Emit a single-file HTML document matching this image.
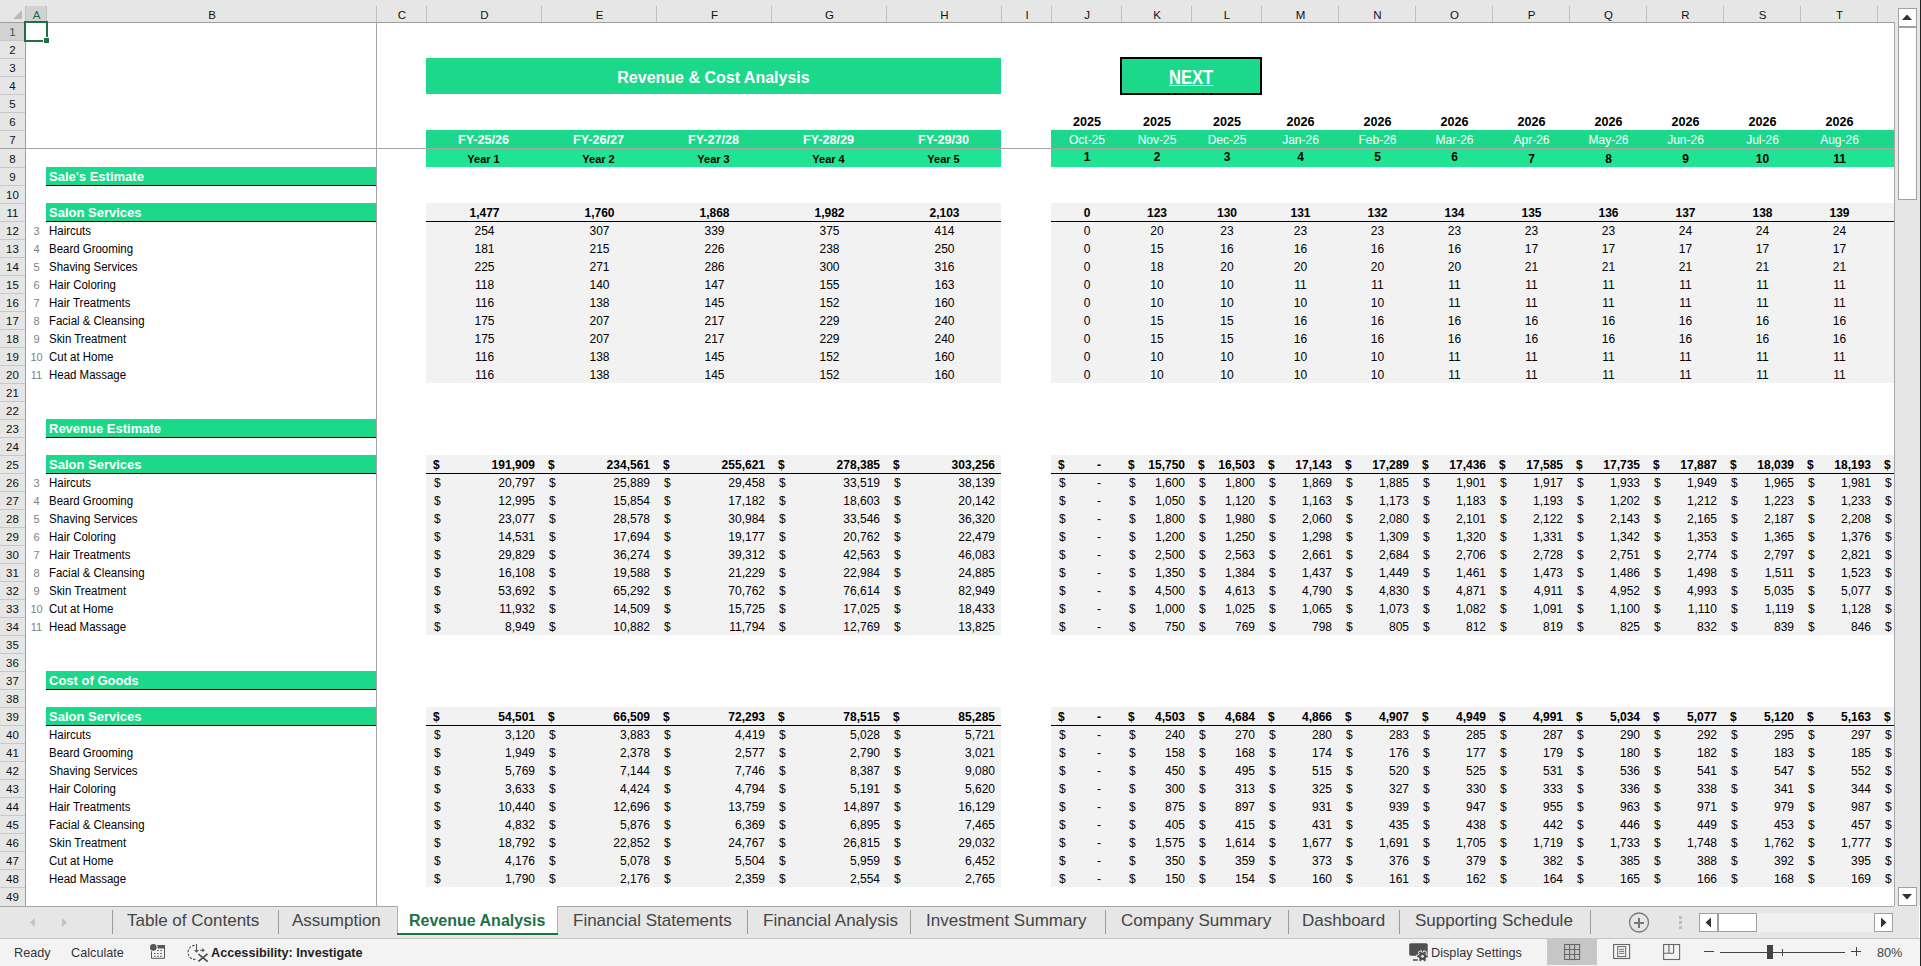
<!DOCTYPE html>
<html><head><meta charset="utf-8"><style>
html,body{margin:0;padding:0}
body{width:1921px;height:966px;overflow:hidden;background:#fff;position:relative;font-family:"Liberation Sans",sans-serif;}
.a{position:absolute}
.t{position:absolute;height:18px;line-height:18px;font-size:12px;white-space:nowrap;color:#000}
.b{font-weight:bold}
.w{color:#fff}
.g{color:#7f7f7f;font-size:11px}
.l{font-size:12px;transform:scaleX(.955);transform-origin:0 0}
.n{font-size:12px}
.hd{font-size:11.5px;line-height:18px}
.tab{font-size:17px;line-height:22px;height:22px;color:#444}
.st{font-size:12.7px;line-height:16px;height:16px;color:#333}
</style></head><body>
<div class="a" style="left:426px;top:58px;width:575px;height:36px;background:#1cd88b;"></div>
<div class="t" style="left:426px;top:68px;width:575px;text-align:center;font-size:16px;font-weight:bold;color:#fff;line-height:20px;height:20px">Revenue &amp; Cost Analysis</div>
<div class="a" style="left:1120px;top:57px;width:138px;height:34px;background:#1cd88b;border:2px solid #000"></div>
<div class="t" style="left:1120px;top:65.5px;width:142px;text-align:center;font-size:19.6px;font-weight:bold;color:#fff;line-height:22px;height:22px"><span style="display:inline-block;transform:scaleX(0.845);text-decoration:underline">NEXT</span></div>
<div class="t b" style="left:1052px;top:113px;width:70px;text-align:center;font-size:12.6px">2025</div>
<div class="t b" style="left:1122px;top:113px;width:70px;text-align:center;font-size:12.6px">2025</div>
<div class="t b" style="left:1192px;top:113px;width:70px;text-align:center;font-size:12.6px">2025</div>
<div class="t b" style="left:1262px;top:113px;width:77px;text-align:center;font-size:12.6px">2026</div>
<div class="t b" style="left:1339px;top:113px;width:77px;text-align:center;font-size:12.6px">2026</div>
<div class="t b" style="left:1416px;top:113px;width:77px;text-align:center;font-size:12.6px">2026</div>
<div class="t b" style="left:1493px;top:113px;width:77px;text-align:center;font-size:12.6px">2026</div>
<div class="t b" style="left:1570px;top:113px;width:77px;text-align:center;font-size:12.6px">2026</div>
<div class="t b" style="left:1647px;top:113px;width:77px;text-align:center;font-size:12.6px">2026</div>
<div class="t b" style="left:1724px;top:113px;width:77px;text-align:center;font-size:12.6px">2026</div>
<div class="t b" style="left:1801px;top:113px;width:77px;text-align:center;font-size:12.6px">2026</div>
<div class="a" style="left:426px;top:130px;width:575px;height:18px;background:#1cd88b;"></div>
<div class="a" style="left:1051px;top:130px;width:843px;height:18px;background:#1cd88b;"></div>
<div class="a" style="left:426px;top:149px;width:575px;height:18px;background:#20e493;"></div>
<div class="a" style="left:1051px;top:149px;width:843px;height:18px;background:#20e493;"></div>
<div class="t b w" style="left:426px;top:131px;width:115px;text-align:center;font-size:12.6px">FY-25/26</div>
<div class="t b" style="left:426px;top:150px;width:115px;text-align:center;font-size:11px">Year 1</div>
<div class="t b w" style="left:541px;top:131px;width:115px;text-align:center;font-size:12.6px">FY-26/27</div>
<div class="t b" style="left:541px;top:150px;width:115px;text-align:center;font-size:11px">Year 2</div>
<div class="t b w" style="left:656px;top:131px;width:115px;text-align:center;font-size:12.6px">FY-27/28</div>
<div class="t b" style="left:656px;top:150px;width:115px;text-align:center;font-size:11px">Year 3</div>
<div class="t b w" style="left:771px;top:131px;width:115px;text-align:center;font-size:12.6px">FY-28/29</div>
<div class="t b" style="left:771px;top:150px;width:115px;text-align:center;font-size:11px">Year 4</div>
<div class="t b w" style="left:886px;top:131px;width:115px;text-align:center;font-size:12.6px">FY-29/30</div>
<div class="t b" style="left:886px;top:150px;width:115px;text-align:center;font-size:11px">Year 5</div>
<div class="t w" style="left:1052px;top:131px;width:70px;text-align:center;">Oct-25</div>
<div class="t b" style="left:1052px;top:148px;width:70px;text-align:center;">1</div>
<div class="t w" style="left:1122px;top:131px;width:70px;text-align:center;">Nov-25</div>
<div class="t b" style="left:1122px;top:148px;width:70px;text-align:center;">2</div>
<div class="t w" style="left:1192px;top:131px;width:70px;text-align:center;">Dec-25</div>
<div class="t b" style="left:1192px;top:148px;width:70px;text-align:center;">3</div>
<div class="t w" style="left:1262px;top:131px;width:77px;text-align:center;">Jan-26</div>
<div class="t b" style="left:1262px;top:148px;width:77px;text-align:center;">4</div>
<div class="t w" style="left:1339px;top:131px;width:77px;text-align:center;">Feb-26</div>
<div class="t b" style="left:1339px;top:148px;width:77px;text-align:center;">5</div>
<div class="t w" style="left:1416px;top:131px;width:77px;text-align:center;">Mar-26</div>
<div class="t b" style="left:1416px;top:148px;width:77px;text-align:center;">6</div>
<div class="t w" style="left:1493px;top:131px;width:77px;text-align:center;">Apr-26</div>
<div class="t b" style="left:1493px;top:150px;width:77px;text-align:center;">7</div>
<div class="t w" style="left:1570px;top:131px;width:77px;text-align:center;">May-26</div>
<div class="t b" style="left:1570px;top:150px;width:77px;text-align:center;">8</div>
<div class="t w" style="left:1647px;top:131px;width:77px;text-align:center;">Jun-26</div>
<div class="t b" style="left:1647px;top:150px;width:77px;text-align:center;">9</div>
<div class="t w" style="left:1724px;top:131px;width:77px;text-align:center;">Jul-26</div>
<div class="t b" style="left:1724px;top:150px;width:77px;text-align:center;">10</div>
<div class="t w" style="left:1801px;top:131px;width:77px;text-align:center;">Aug-26</div>
<div class="t b" style="left:1801px;top:150px;width:77px;text-align:center;">11</div>
<div class="a" style="left:46px;top:167px;width:330px;height:18px;background:#1cd88b;border-bottom:1px solid #000"></div>
<div class="t b w" style="left:49px;top:168px;width:300px;font-size:13px">Sale's Estimate</div>
<div class="a" style="left:46px;top:419px;width:330px;height:18px;background:#1cd88b;border-bottom:1px solid #000"></div>
<div class="t b w" style="left:49px;top:420px;width:300px;font-size:13px">Revenue Estimate</div>
<div class="a" style="left:46px;top:671px;width:330px;height:18px;background:#1cd88b;border-bottom:1px solid #000"></div>
<div class="t b w" style="left:49px;top:672px;width:300px;font-size:13px">Cost of Goods</div>
<div class="a" style="left:46px;top:203px;width:330px;height:18px;background:#1cd88b;border-bottom:1px solid #000"></div>
<div class="t b w" style="left:49px;top:204px;width:300px;font-size:13px">Salon Services</div>
<div class="a" style="left:46px;top:455px;width:330px;height:18px;background:#1cd88b;border-bottom:1px solid #000"></div>
<div class="t b w" style="left:49px;top:456px;width:300px;font-size:13px">Salon Services</div>
<div class="a" style="left:46px;top:707px;width:330px;height:18px;background:#1cd88b;border-bottom:1px solid #000"></div>
<div class="t b w" style="left:49px;top:708px;width:300px;font-size:13px">Salon Services</div>
<div class="a" style="left:426px;top:203px;width:575px;height:180px;background:#f2f2f2;"></div>
<div class="a" style="left:1051px;top:203px;width:843px;height:180px;background:#f2f2f2;"></div>
<div class="a" style="left:426px;top:221px;width:575px;height:1px;background:#000;"></div>
<div class="a" style="left:1051px;top:221px;width:843px;height:1px;background:#000;"></div>
<div class="a" style="left:426px;top:455px;width:575px;height:180px;background:#f2f2f2;"></div>
<div class="a" style="left:1051px;top:455px;width:843px;height:180px;background:#f2f2f2;"></div>
<div class="a" style="left:426px;top:473px;width:575px;height:1px;background:#000;"></div>
<div class="a" style="left:1051px;top:473px;width:843px;height:1px;background:#000;"></div>
<div class="a" style="left:426px;top:707px;width:575px;height:180px;background:#f2f2f2;"></div>
<div class="a" style="left:1051px;top:707px;width:843px;height:180px;background:#f2f2f2;"></div>
<div class="a" style="left:426px;top:725px;width:575px;height:1px;background:#000;"></div>
<div class="a" style="left:1051px;top:725px;width:843px;height:1px;background:#000;"></div>
<div class="t g" style="left:26px;top:222px;width:21px;text-align:center;">3</div>
<div class="t l" style="left:49px;top:222px">Haircuts</div>
<div class="t g" style="left:26px;top:474px;width:21px;text-align:center;">3</div>
<div class="t l" style="left:49px;top:474px">Haircuts</div>
<div class="t l" style="left:49px;top:726px">Haircuts</div>
<div class="t g" style="left:26px;top:240px;width:21px;text-align:center;">4</div>
<div class="t l" style="left:49px;top:240px">Beard Grooming</div>
<div class="t g" style="left:26px;top:492px;width:21px;text-align:center;">4</div>
<div class="t l" style="left:49px;top:492px">Beard Grooming</div>
<div class="t l" style="left:49px;top:744px">Beard Grooming</div>
<div class="t g" style="left:26px;top:258px;width:21px;text-align:center;">5</div>
<div class="t l" style="left:49px;top:258px">Shaving Services</div>
<div class="t g" style="left:26px;top:510px;width:21px;text-align:center;">5</div>
<div class="t l" style="left:49px;top:510px">Shaving Services</div>
<div class="t l" style="left:49px;top:762px">Shaving Services</div>
<div class="t g" style="left:26px;top:276px;width:21px;text-align:center;">6</div>
<div class="t l" style="left:49px;top:276px">Hair Coloring</div>
<div class="t g" style="left:26px;top:528px;width:21px;text-align:center;">6</div>
<div class="t l" style="left:49px;top:528px">Hair Coloring</div>
<div class="t l" style="left:49px;top:780px">Hair Coloring</div>
<div class="t g" style="left:26px;top:294px;width:21px;text-align:center;">7</div>
<div class="t l" style="left:49px;top:294px">Hair Treatments</div>
<div class="t g" style="left:26px;top:546px;width:21px;text-align:center;">7</div>
<div class="t l" style="left:49px;top:546px">Hair Treatments</div>
<div class="t l" style="left:49px;top:798px">Hair Treatments</div>
<div class="t g" style="left:26px;top:312px;width:21px;text-align:center;">8</div>
<div class="t l" style="left:49px;top:312px">Facial &amp; Cleansing</div>
<div class="t g" style="left:26px;top:564px;width:21px;text-align:center;">8</div>
<div class="t l" style="left:49px;top:564px">Facial &amp; Cleansing</div>
<div class="t l" style="left:49px;top:816px">Facial &amp; Cleansing</div>
<div class="t g" style="left:26px;top:330px;width:21px;text-align:center;">9</div>
<div class="t l" style="left:49px;top:330px">Skin Treatment</div>
<div class="t g" style="left:26px;top:582px;width:21px;text-align:center;">9</div>
<div class="t l" style="left:49px;top:582px">Skin Treatment</div>
<div class="t l" style="left:49px;top:834px">Skin Treatment</div>
<div class="t g" style="left:26px;top:348px;width:21px;text-align:center;">10</div>
<div class="t l" style="left:49px;top:348px">Cut at Home</div>
<div class="t g" style="left:26px;top:600px;width:21px;text-align:center;">10</div>
<div class="t l" style="left:49px;top:600px">Cut at Home</div>
<div class="t l" style="left:49px;top:852px">Cut at Home</div>
<div class="t g" style="left:26px;top:366px;width:21px;text-align:center;">11</div>
<div class="t l" style="left:49px;top:366px">Head Massage</div>
<div class="t g" style="left:26px;top:618px;width:21px;text-align:center;">11</div>
<div class="t l" style="left:49px;top:618px">Head Massage</div>
<div class="t l" style="left:49px;top:870px">Head Massage</div>
<div class="t n b" style="left:427px;top:204px;width:115px;text-align:center;">1,477</div>
<div class="t n b" style="left:542px;top:204px;width:115px;text-align:center;">1,760</div>
<div class="t n b" style="left:657px;top:204px;width:115px;text-align:center;">1,868</div>
<div class="t n b" style="left:772px;top:204px;width:115px;text-align:center;">1,982</div>
<div class="t n b" style="left:887px;top:204px;width:115px;text-align:center;">2,103</div>
<div class="t n b" style="left:1052px;top:204px;width:70px;text-align:center;">0</div>
<div class="t n b" style="left:1122px;top:204px;width:70px;text-align:center;">123</div>
<div class="t n b" style="left:1192px;top:204px;width:70px;text-align:center;">130</div>
<div class="t n b" style="left:1262px;top:204px;width:77px;text-align:center;">131</div>
<div class="t n b" style="left:1339px;top:204px;width:77px;text-align:center;">132</div>
<div class="t n b" style="left:1416px;top:204px;width:77px;text-align:center;">134</div>
<div class="t n b" style="left:1493px;top:204px;width:77px;text-align:center;">135</div>
<div class="t n b" style="left:1570px;top:204px;width:77px;text-align:center;">136</div>
<div class="t n b" style="left:1647px;top:204px;width:77px;text-align:center;">137</div>
<div class="t n b" style="left:1724px;top:204px;width:77px;text-align:center;">138</div>
<div class="t n b" style="left:1801px;top:204px;width:77px;text-align:center;">139</div>
<div class="t n" style="left:427px;top:222px;width:115px;text-align:center;">254</div>
<div class="t n" style="left:542px;top:222px;width:115px;text-align:center;">307</div>
<div class="t n" style="left:657px;top:222px;width:115px;text-align:center;">339</div>
<div class="t n" style="left:772px;top:222px;width:115px;text-align:center;">375</div>
<div class="t n" style="left:887px;top:222px;width:115px;text-align:center;">414</div>
<div class="t n" style="left:1052px;top:222px;width:70px;text-align:center;">0</div>
<div class="t n" style="left:1122px;top:222px;width:70px;text-align:center;">20</div>
<div class="t n" style="left:1192px;top:222px;width:70px;text-align:center;">23</div>
<div class="t n" style="left:1262px;top:222px;width:77px;text-align:center;">23</div>
<div class="t n" style="left:1339px;top:222px;width:77px;text-align:center;">23</div>
<div class="t n" style="left:1416px;top:222px;width:77px;text-align:center;">23</div>
<div class="t n" style="left:1493px;top:222px;width:77px;text-align:center;">23</div>
<div class="t n" style="left:1570px;top:222px;width:77px;text-align:center;">23</div>
<div class="t n" style="left:1647px;top:222px;width:77px;text-align:center;">24</div>
<div class="t n" style="left:1724px;top:222px;width:77px;text-align:center;">24</div>
<div class="t n" style="left:1801px;top:222px;width:77px;text-align:center;">24</div>
<div class="t n" style="left:427px;top:240px;width:115px;text-align:center;">181</div>
<div class="t n" style="left:542px;top:240px;width:115px;text-align:center;">215</div>
<div class="t n" style="left:657px;top:240px;width:115px;text-align:center;">226</div>
<div class="t n" style="left:772px;top:240px;width:115px;text-align:center;">238</div>
<div class="t n" style="left:887px;top:240px;width:115px;text-align:center;">250</div>
<div class="t n" style="left:1052px;top:240px;width:70px;text-align:center;">0</div>
<div class="t n" style="left:1122px;top:240px;width:70px;text-align:center;">15</div>
<div class="t n" style="left:1192px;top:240px;width:70px;text-align:center;">16</div>
<div class="t n" style="left:1262px;top:240px;width:77px;text-align:center;">16</div>
<div class="t n" style="left:1339px;top:240px;width:77px;text-align:center;">16</div>
<div class="t n" style="left:1416px;top:240px;width:77px;text-align:center;">16</div>
<div class="t n" style="left:1493px;top:240px;width:77px;text-align:center;">17</div>
<div class="t n" style="left:1570px;top:240px;width:77px;text-align:center;">17</div>
<div class="t n" style="left:1647px;top:240px;width:77px;text-align:center;">17</div>
<div class="t n" style="left:1724px;top:240px;width:77px;text-align:center;">17</div>
<div class="t n" style="left:1801px;top:240px;width:77px;text-align:center;">17</div>
<div class="t n" style="left:427px;top:258px;width:115px;text-align:center;">225</div>
<div class="t n" style="left:542px;top:258px;width:115px;text-align:center;">271</div>
<div class="t n" style="left:657px;top:258px;width:115px;text-align:center;">286</div>
<div class="t n" style="left:772px;top:258px;width:115px;text-align:center;">300</div>
<div class="t n" style="left:887px;top:258px;width:115px;text-align:center;">316</div>
<div class="t n" style="left:1052px;top:258px;width:70px;text-align:center;">0</div>
<div class="t n" style="left:1122px;top:258px;width:70px;text-align:center;">18</div>
<div class="t n" style="left:1192px;top:258px;width:70px;text-align:center;">20</div>
<div class="t n" style="left:1262px;top:258px;width:77px;text-align:center;">20</div>
<div class="t n" style="left:1339px;top:258px;width:77px;text-align:center;">20</div>
<div class="t n" style="left:1416px;top:258px;width:77px;text-align:center;">20</div>
<div class="t n" style="left:1493px;top:258px;width:77px;text-align:center;">21</div>
<div class="t n" style="left:1570px;top:258px;width:77px;text-align:center;">21</div>
<div class="t n" style="left:1647px;top:258px;width:77px;text-align:center;">21</div>
<div class="t n" style="left:1724px;top:258px;width:77px;text-align:center;">21</div>
<div class="t n" style="left:1801px;top:258px;width:77px;text-align:center;">21</div>
<div class="t n" style="left:427px;top:276px;width:115px;text-align:center;">118</div>
<div class="t n" style="left:542px;top:276px;width:115px;text-align:center;">140</div>
<div class="t n" style="left:657px;top:276px;width:115px;text-align:center;">147</div>
<div class="t n" style="left:772px;top:276px;width:115px;text-align:center;">155</div>
<div class="t n" style="left:887px;top:276px;width:115px;text-align:center;">163</div>
<div class="t n" style="left:1052px;top:276px;width:70px;text-align:center;">0</div>
<div class="t n" style="left:1122px;top:276px;width:70px;text-align:center;">10</div>
<div class="t n" style="left:1192px;top:276px;width:70px;text-align:center;">10</div>
<div class="t n" style="left:1262px;top:276px;width:77px;text-align:center;">11</div>
<div class="t n" style="left:1339px;top:276px;width:77px;text-align:center;">11</div>
<div class="t n" style="left:1416px;top:276px;width:77px;text-align:center;">11</div>
<div class="t n" style="left:1493px;top:276px;width:77px;text-align:center;">11</div>
<div class="t n" style="left:1570px;top:276px;width:77px;text-align:center;">11</div>
<div class="t n" style="left:1647px;top:276px;width:77px;text-align:center;">11</div>
<div class="t n" style="left:1724px;top:276px;width:77px;text-align:center;">11</div>
<div class="t n" style="left:1801px;top:276px;width:77px;text-align:center;">11</div>
<div class="t n" style="left:427px;top:294px;width:115px;text-align:center;">116</div>
<div class="t n" style="left:542px;top:294px;width:115px;text-align:center;">138</div>
<div class="t n" style="left:657px;top:294px;width:115px;text-align:center;">145</div>
<div class="t n" style="left:772px;top:294px;width:115px;text-align:center;">152</div>
<div class="t n" style="left:887px;top:294px;width:115px;text-align:center;">160</div>
<div class="t n" style="left:1052px;top:294px;width:70px;text-align:center;">0</div>
<div class="t n" style="left:1122px;top:294px;width:70px;text-align:center;">10</div>
<div class="t n" style="left:1192px;top:294px;width:70px;text-align:center;">10</div>
<div class="t n" style="left:1262px;top:294px;width:77px;text-align:center;">10</div>
<div class="t n" style="left:1339px;top:294px;width:77px;text-align:center;">10</div>
<div class="t n" style="left:1416px;top:294px;width:77px;text-align:center;">11</div>
<div class="t n" style="left:1493px;top:294px;width:77px;text-align:center;">11</div>
<div class="t n" style="left:1570px;top:294px;width:77px;text-align:center;">11</div>
<div class="t n" style="left:1647px;top:294px;width:77px;text-align:center;">11</div>
<div class="t n" style="left:1724px;top:294px;width:77px;text-align:center;">11</div>
<div class="t n" style="left:1801px;top:294px;width:77px;text-align:center;">11</div>
<div class="t n" style="left:427px;top:312px;width:115px;text-align:center;">175</div>
<div class="t n" style="left:542px;top:312px;width:115px;text-align:center;">207</div>
<div class="t n" style="left:657px;top:312px;width:115px;text-align:center;">217</div>
<div class="t n" style="left:772px;top:312px;width:115px;text-align:center;">229</div>
<div class="t n" style="left:887px;top:312px;width:115px;text-align:center;">240</div>
<div class="t n" style="left:1052px;top:312px;width:70px;text-align:center;">0</div>
<div class="t n" style="left:1122px;top:312px;width:70px;text-align:center;">15</div>
<div class="t n" style="left:1192px;top:312px;width:70px;text-align:center;">15</div>
<div class="t n" style="left:1262px;top:312px;width:77px;text-align:center;">16</div>
<div class="t n" style="left:1339px;top:312px;width:77px;text-align:center;">16</div>
<div class="t n" style="left:1416px;top:312px;width:77px;text-align:center;">16</div>
<div class="t n" style="left:1493px;top:312px;width:77px;text-align:center;">16</div>
<div class="t n" style="left:1570px;top:312px;width:77px;text-align:center;">16</div>
<div class="t n" style="left:1647px;top:312px;width:77px;text-align:center;">16</div>
<div class="t n" style="left:1724px;top:312px;width:77px;text-align:center;">16</div>
<div class="t n" style="left:1801px;top:312px;width:77px;text-align:center;">16</div>
<div class="t n" style="left:427px;top:330px;width:115px;text-align:center;">175</div>
<div class="t n" style="left:542px;top:330px;width:115px;text-align:center;">207</div>
<div class="t n" style="left:657px;top:330px;width:115px;text-align:center;">217</div>
<div class="t n" style="left:772px;top:330px;width:115px;text-align:center;">229</div>
<div class="t n" style="left:887px;top:330px;width:115px;text-align:center;">240</div>
<div class="t n" style="left:1052px;top:330px;width:70px;text-align:center;">0</div>
<div class="t n" style="left:1122px;top:330px;width:70px;text-align:center;">15</div>
<div class="t n" style="left:1192px;top:330px;width:70px;text-align:center;">15</div>
<div class="t n" style="left:1262px;top:330px;width:77px;text-align:center;">16</div>
<div class="t n" style="left:1339px;top:330px;width:77px;text-align:center;">16</div>
<div class="t n" style="left:1416px;top:330px;width:77px;text-align:center;">16</div>
<div class="t n" style="left:1493px;top:330px;width:77px;text-align:center;">16</div>
<div class="t n" style="left:1570px;top:330px;width:77px;text-align:center;">16</div>
<div class="t n" style="left:1647px;top:330px;width:77px;text-align:center;">16</div>
<div class="t n" style="left:1724px;top:330px;width:77px;text-align:center;">16</div>
<div class="t n" style="left:1801px;top:330px;width:77px;text-align:center;">16</div>
<div class="t n" style="left:427px;top:348px;width:115px;text-align:center;">116</div>
<div class="t n" style="left:542px;top:348px;width:115px;text-align:center;">138</div>
<div class="t n" style="left:657px;top:348px;width:115px;text-align:center;">145</div>
<div class="t n" style="left:772px;top:348px;width:115px;text-align:center;">152</div>
<div class="t n" style="left:887px;top:348px;width:115px;text-align:center;">160</div>
<div class="t n" style="left:1052px;top:348px;width:70px;text-align:center;">0</div>
<div class="t n" style="left:1122px;top:348px;width:70px;text-align:center;">10</div>
<div class="t n" style="left:1192px;top:348px;width:70px;text-align:center;">10</div>
<div class="t n" style="left:1262px;top:348px;width:77px;text-align:center;">10</div>
<div class="t n" style="left:1339px;top:348px;width:77px;text-align:center;">10</div>
<div class="t n" style="left:1416px;top:348px;width:77px;text-align:center;">11</div>
<div class="t n" style="left:1493px;top:348px;width:77px;text-align:center;">11</div>
<div class="t n" style="left:1570px;top:348px;width:77px;text-align:center;">11</div>
<div class="t n" style="left:1647px;top:348px;width:77px;text-align:center;">11</div>
<div class="t n" style="left:1724px;top:348px;width:77px;text-align:center;">11</div>
<div class="t n" style="left:1801px;top:348px;width:77px;text-align:center;">11</div>
<div class="t n" style="left:427px;top:366px;width:115px;text-align:center;">116</div>
<div class="t n" style="left:542px;top:366px;width:115px;text-align:center;">138</div>
<div class="t n" style="left:657px;top:366px;width:115px;text-align:center;">145</div>
<div class="t n" style="left:772px;top:366px;width:115px;text-align:center;">152</div>
<div class="t n" style="left:887px;top:366px;width:115px;text-align:center;">160</div>
<div class="t n" style="left:1052px;top:366px;width:70px;text-align:center;">0</div>
<div class="t n" style="left:1122px;top:366px;width:70px;text-align:center;">10</div>
<div class="t n" style="left:1192px;top:366px;width:70px;text-align:center;">10</div>
<div class="t n" style="left:1262px;top:366px;width:77px;text-align:center;">10</div>
<div class="t n" style="left:1339px;top:366px;width:77px;text-align:center;">10</div>
<div class="t n" style="left:1416px;top:366px;width:77px;text-align:center;">11</div>
<div class="t n" style="left:1493px;top:366px;width:77px;text-align:center;">11</div>
<div class="t n" style="left:1570px;top:366px;width:77px;text-align:center;">11</div>
<div class="t n" style="left:1647px;top:366px;width:77px;text-align:center;">11</div>
<div class="t n" style="left:1724px;top:366px;width:77px;text-align:center;">11</div>
<div class="t n" style="left:1801px;top:366px;width:77px;text-align:center;">11</div>
<div class="t n b" style="left:433px;top:456px">$</div>
<div class="t n b" style="left:426px;top:456px;width:109px;text-align:right;">191,909</div>
<div class="t n b" style="left:548px;top:456px">$</div>
<div class="t n b" style="left:541px;top:456px;width:109px;text-align:right;">234,561</div>
<div class="t n b" style="left:663px;top:456px">$</div>
<div class="t n b" style="left:656px;top:456px;width:109px;text-align:right;">255,621</div>
<div class="t n b" style="left:778px;top:456px">$</div>
<div class="t n b" style="left:771px;top:456px;width:109px;text-align:right;">278,385</div>
<div class="t n b" style="left:893px;top:456px">$</div>
<div class="t n b" style="left:886px;top:456px;width:109px;text-align:right;">303,256</div>
<div class="t n b" style="left:1058px;top:456px">$</div>
<div class="t n b" style="left:1051px;top:456px;width:50px;text-align:right;">-</div>
<div class="t n b" style="left:1128px;top:456px">$</div>
<div class="t n b" style="left:1121px;top:456px;width:64px;text-align:right;">15,750</div>
<div class="t n b" style="left:1198px;top:456px">$</div>
<div class="t n b" style="left:1191px;top:456px;width:64px;text-align:right;">16,503</div>
<div class="t n b" style="left:1268px;top:456px">$</div>
<div class="t n b" style="left:1261px;top:456px;width:71px;text-align:right;">17,143</div>
<div class="t n b" style="left:1345px;top:456px">$</div>
<div class="t n b" style="left:1338px;top:456px;width:71px;text-align:right;">17,289</div>
<div class="t n b" style="left:1422px;top:456px">$</div>
<div class="t n b" style="left:1415px;top:456px;width:71px;text-align:right;">17,436</div>
<div class="t n b" style="left:1499px;top:456px">$</div>
<div class="t n b" style="left:1492px;top:456px;width:71px;text-align:right;">17,585</div>
<div class="t n b" style="left:1576px;top:456px">$</div>
<div class="t n b" style="left:1569px;top:456px;width:71px;text-align:right;">17,735</div>
<div class="t n b" style="left:1653px;top:456px">$</div>
<div class="t n b" style="left:1646px;top:456px;width:71px;text-align:right;">17,887</div>
<div class="t n b" style="left:1730px;top:456px">$</div>
<div class="t n b" style="left:1723px;top:456px;width:71px;text-align:right;">18,039</div>
<div class="t n b" style="left:1807px;top:456px">$</div>
<div class="t n b" style="left:1800px;top:456px;width:71px;text-align:right;">18,193</div>
<div class="t n b" style="left:1884px;top:456px">$</div>
<div class="t n" style="left:434px;top:474px">$</div>
<div class="t n" style="left:426px;top:474px;width:109px;text-align:right;">20,797</div>
<div class="t n" style="left:549px;top:474px">$</div>
<div class="t n" style="left:541px;top:474px;width:109px;text-align:right;">25,889</div>
<div class="t n" style="left:664px;top:474px">$</div>
<div class="t n" style="left:656px;top:474px;width:109px;text-align:right;">29,458</div>
<div class="t n" style="left:779px;top:474px">$</div>
<div class="t n" style="left:771px;top:474px;width:109px;text-align:right;">33,519</div>
<div class="t n" style="left:894px;top:474px">$</div>
<div class="t n" style="left:886px;top:474px;width:109px;text-align:right;">38,139</div>
<div class="t n" style="left:1059px;top:474px">$</div>
<div class="t n" style="left:1051px;top:474px;width:50px;text-align:right;">-</div>
<div class="t n" style="left:1129px;top:474px">$</div>
<div class="t n" style="left:1121px;top:474px;width:64px;text-align:right;">1,600</div>
<div class="t n" style="left:1199px;top:474px">$</div>
<div class="t n" style="left:1191px;top:474px;width:64px;text-align:right;">1,800</div>
<div class="t n" style="left:1269px;top:474px">$</div>
<div class="t n" style="left:1261px;top:474px;width:71px;text-align:right;">1,869</div>
<div class="t n" style="left:1346px;top:474px">$</div>
<div class="t n" style="left:1338px;top:474px;width:71px;text-align:right;">1,885</div>
<div class="t n" style="left:1423px;top:474px">$</div>
<div class="t n" style="left:1415px;top:474px;width:71px;text-align:right;">1,901</div>
<div class="t n" style="left:1500px;top:474px">$</div>
<div class="t n" style="left:1492px;top:474px;width:71px;text-align:right;">1,917</div>
<div class="t n" style="left:1577px;top:474px">$</div>
<div class="t n" style="left:1569px;top:474px;width:71px;text-align:right;">1,933</div>
<div class="t n" style="left:1654px;top:474px">$</div>
<div class="t n" style="left:1646px;top:474px;width:71px;text-align:right;">1,949</div>
<div class="t n" style="left:1731px;top:474px">$</div>
<div class="t n" style="left:1723px;top:474px;width:71px;text-align:right;">1,965</div>
<div class="t n" style="left:1808px;top:474px">$</div>
<div class="t n" style="left:1800px;top:474px;width:71px;text-align:right;">1,981</div>
<div class="t n" style="left:1885px;top:474px">$</div>
<div class="t n" style="left:434px;top:492px">$</div>
<div class="t n" style="left:426px;top:492px;width:109px;text-align:right;">12,995</div>
<div class="t n" style="left:549px;top:492px">$</div>
<div class="t n" style="left:541px;top:492px;width:109px;text-align:right;">15,854</div>
<div class="t n" style="left:664px;top:492px">$</div>
<div class="t n" style="left:656px;top:492px;width:109px;text-align:right;">17,182</div>
<div class="t n" style="left:779px;top:492px">$</div>
<div class="t n" style="left:771px;top:492px;width:109px;text-align:right;">18,603</div>
<div class="t n" style="left:894px;top:492px">$</div>
<div class="t n" style="left:886px;top:492px;width:109px;text-align:right;">20,142</div>
<div class="t n" style="left:1059px;top:492px">$</div>
<div class="t n" style="left:1051px;top:492px;width:50px;text-align:right;">-</div>
<div class="t n" style="left:1129px;top:492px">$</div>
<div class="t n" style="left:1121px;top:492px;width:64px;text-align:right;">1,050</div>
<div class="t n" style="left:1199px;top:492px">$</div>
<div class="t n" style="left:1191px;top:492px;width:64px;text-align:right;">1,120</div>
<div class="t n" style="left:1269px;top:492px">$</div>
<div class="t n" style="left:1261px;top:492px;width:71px;text-align:right;">1,163</div>
<div class="t n" style="left:1346px;top:492px">$</div>
<div class="t n" style="left:1338px;top:492px;width:71px;text-align:right;">1,173</div>
<div class="t n" style="left:1423px;top:492px">$</div>
<div class="t n" style="left:1415px;top:492px;width:71px;text-align:right;">1,183</div>
<div class="t n" style="left:1500px;top:492px">$</div>
<div class="t n" style="left:1492px;top:492px;width:71px;text-align:right;">1,193</div>
<div class="t n" style="left:1577px;top:492px">$</div>
<div class="t n" style="left:1569px;top:492px;width:71px;text-align:right;">1,202</div>
<div class="t n" style="left:1654px;top:492px">$</div>
<div class="t n" style="left:1646px;top:492px;width:71px;text-align:right;">1,212</div>
<div class="t n" style="left:1731px;top:492px">$</div>
<div class="t n" style="left:1723px;top:492px;width:71px;text-align:right;">1,223</div>
<div class="t n" style="left:1808px;top:492px">$</div>
<div class="t n" style="left:1800px;top:492px;width:71px;text-align:right;">1,233</div>
<div class="t n" style="left:1885px;top:492px">$</div>
<div class="t n" style="left:434px;top:510px">$</div>
<div class="t n" style="left:426px;top:510px;width:109px;text-align:right;">23,077</div>
<div class="t n" style="left:549px;top:510px">$</div>
<div class="t n" style="left:541px;top:510px;width:109px;text-align:right;">28,578</div>
<div class="t n" style="left:664px;top:510px">$</div>
<div class="t n" style="left:656px;top:510px;width:109px;text-align:right;">30,984</div>
<div class="t n" style="left:779px;top:510px">$</div>
<div class="t n" style="left:771px;top:510px;width:109px;text-align:right;">33,546</div>
<div class="t n" style="left:894px;top:510px">$</div>
<div class="t n" style="left:886px;top:510px;width:109px;text-align:right;">36,320</div>
<div class="t n" style="left:1059px;top:510px">$</div>
<div class="t n" style="left:1051px;top:510px;width:50px;text-align:right;">-</div>
<div class="t n" style="left:1129px;top:510px">$</div>
<div class="t n" style="left:1121px;top:510px;width:64px;text-align:right;">1,800</div>
<div class="t n" style="left:1199px;top:510px">$</div>
<div class="t n" style="left:1191px;top:510px;width:64px;text-align:right;">1,980</div>
<div class="t n" style="left:1269px;top:510px">$</div>
<div class="t n" style="left:1261px;top:510px;width:71px;text-align:right;">2,060</div>
<div class="t n" style="left:1346px;top:510px">$</div>
<div class="t n" style="left:1338px;top:510px;width:71px;text-align:right;">2,080</div>
<div class="t n" style="left:1423px;top:510px">$</div>
<div class="t n" style="left:1415px;top:510px;width:71px;text-align:right;">2,101</div>
<div class="t n" style="left:1500px;top:510px">$</div>
<div class="t n" style="left:1492px;top:510px;width:71px;text-align:right;">2,122</div>
<div class="t n" style="left:1577px;top:510px">$</div>
<div class="t n" style="left:1569px;top:510px;width:71px;text-align:right;">2,143</div>
<div class="t n" style="left:1654px;top:510px">$</div>
<div class="t n" style="left:1646px;top:510px;width:71px;text-align:right;">2,165</div>
<div class="t n" style="left:1731px;top:510px">$</div>
<div class="t n" style="left:1723px;top:510px;width:71px;text-align:right;">2,187</div>
<div class="t n" style="left:1808px;top:510px">$</div>
<div class="t n" style="left:1800px;top:510px;width:71px;text-align:right;">2,208</div>
<div class="t n" style="left:1885px;top:510px">$</div>
<div class="t n" style="left:434px;top:528px">$</div>
<div class="t n" style="left:426px;top:528px;width:109px;text-align:right;">14,531</div>
<div class="t n" style="left:549px;top:528px">$</div>
<div class="t n" style="left:541px;top:528px;width:109px;text-align:right;">17,694</div>
<div class="t n" style="left:664px;top:528px">$</div>
<div class="t n" style="left:656px;top:528px;width:109px;text-align:right;">19,177</div>
<div class="t n" style="left:779px;top:528px">$</div>
<div class="t n" style="left:771px;top:528px;width:109px;text-align:right;">20,762</div>
<div class="t n" style="left:894px;top:528px">$</div>
<div class="t n" style="left:886px;top:528px;width:109px;text-align:right;">22,479</div>
<div class="t n" style="left:1059px;top:528px">$</div>
<div class="t n" style="left:1051px;top:528px;width:50px;text-align:right;">-</div>
<div class="t n" style="left:1129px;top:528px">$</div>
<div class="t n" style="left:1121px;top:528px;width:64px;text-align:right;">1,200</div>
<div class="t n" style="left:1199px;top:528px">$</div>
<div class="t n" style="left:1191px;top:528px;width:64px;text-align:right;">1,250</div>
<div class="t n" style="left:1269px;top:528px">$</div>
<div class="t n" style="left:1261px;top:528px;width:71px;text-align:right;">1,298</div>
<div class="t n" style="left:1346px;top:528px">$</div>
<div class="t n" style="left:1338px;top:528px;width:71px;text-align:right;">1,309</div>
<div class="t n" style="left:1423px;top:528px">$</div>
<div class="t n" style="left:1415px;top:528px;width:71px;text-align:right;">1,320</div>
<div class="t n" style="left:1500px;top:528px">$</div>
<div class="t n" style="left:1492px;top:528px;width:71px;text-align:right;">1,331</div>
<div class="t n" style="left:1577px;top:528px">$</div>
<div class="t n" style="left:1569px;top:528px;width:71px;text-align:right;">1,342</div>
<div class="t n" style="left:1654px;top:528px">$</div>
<div class="t n" style="left:1646px;top:528px;width:71px;text-align:right;">1,353</div>
<div class="t n" style="left:1731px;top:528px">$</div>
<div class="t n" style="left:1723px;top:528px;width:71px;text-align:right;">1,365</div>
<div class="t n" style="left:1808px;top:528px">$</div>
<div class="t n" style="left:1800px;top:528px;width:71px;text-align:right;">1,376</div>
<div class="t n" style="left:1885px;top:528px">$</div>
<div class="t n" style="left:434px;top:546px">$</div>
<div class="t n" style="left:426px;top:546px;width:109px;text-align:right;">29,829</div>
<div class="t n" style="left:549px;top:546px">$</div>
<div class="t n" style="left:541px;top:546px;width:109px;text-align:right;">36,274</div>
<div class="t n" style="left:664px;top:546px">$</div>
<div class="t n" style="left:656px;top:546px;width:109px;text-align:right;">39,312</div>
<div class="t n" style="left:779px;top:546px">$</div>
<div class="t n" style="left:771px;top:546px;width:109px;text-align:right;">42,563</div>
<div class="t n" style="left:894px;top:546px">$</div>
<div class="t n" style="left:886px;top:546px;width:109px;text-align:right;">46,083</div>
<div class="t n" style="left:1059px;top:546px">$</div>
<div class="t n" style="left:1051px;top:546px;width:50px;text-align:right;">-</div>
<div class="t n" style="left:1129px;top:546px">$</div>
<div class="t n" style="left:1121px;top:546px;width:64px;text-align:right;">2,500</div>
<div class="t n" style="left:1199px;top:546px">$</div>
<div class="t n" style="left:1191px;top:546px;width:64px;text-align:right;">2,563</div>
<div class="t n" style="left:1269px;top:546px">$</div>
<div class="t n" style="left:1261px;top:546px;width:71px;text-align:right;">2,661</div>
<div class="t n" style="left:1346px;top:546px">$</div>
<div class="t n" style="left:1338px;top:546px;width:71px;text-align:right;">2,684</div>
<div class="t n" style="left:1423px;top:546px">$</div>
<div class="t n" style="left:1415px;top:546px;width:71px;text-align:right;">2,706</div>
<div class="t n" style="left:1500px;top:546px">$</div>
<div class="t n" style="left:1492px;top:546px;width:71px;text-align:right;">2,728</div>
<div class="t n" style="left:1577px;top:546px">$</div>
<div class="t n" style="left:1569px;top:546px;width:71px;text-align:right;">2,751</div>
<div class="t n" style="left:1654px;top:546px">$</div>
<div class="t n" style="left:1646px;top:546px;width:71px;text-align:right;">2,774</div>
<div class="t n" style="left:1731px;top:546px">$</div>
<div class="t n" style="left:1723px;top:546px;width:71px;text-align:right;">2,797</div>
<div class="t n" style="left:1808px;top:546px">$</div>
<div class="t n" style="left:1800px;top:546px;width:71px;text-align:right;">2,821</div>
<div class="t n" style="left:1885px;top:546px">$</div>
<div class="t n" style="left:434px;top:564px">$</div>
<div class="t n" style="left:426px;top:564px;width:109px;text-align:right;">16,108</div>
<div class="t n" style="left:549px;top:564px">$</div>
<div class="t n" style="left:541px;top:564px;width:109px;text-align:right;">19,588</div>
<div class="t n" style="left:664px;top:564px">$</div>
<div class="t n" style="left:656px;top:564px;width:109px;text-align:right;">21,229</div>
<div class="t n" style="left:779px;top:564px">$</div>
<div class="t n" style="left:771px;top:564px;width:109px;text-align:right;">22,984</div>
<div class="t n" style="left:894px;top:564px">$</div>
<div class="t n" style="left:886px;top:564px;width:109px;text-align:right;">24,885</div>
<div class="t n" style="left:1059px;top:564px">$</div>
<div class="t n" style="left:1051px;top:564px;width:50px;text-align:right;">-</div>
<div class="t n" style="left:1129px;top:564px">$</div>
<div class="t n" style="left:1121px;top:564px;width:64px;text-align:right;">1,350</div>
<div class="t n" style="left:1199px;top:564px">$</div>
<div class="t n" style="left:1191px;top:564px;width:64px;text-align:right;">1,384</div>
<div class="t n" style="left:1269px;top:564px">$</div>
<div class="t n" style="left:1261px;top:564px;width:71px;text-align:right;">1,437</div>
<div class="t n" style="left:1346px;top:564px">$</div>
<div class="t n" style="left:1338px;top:564px;width:71px;text-align:right;">1,449</div>
<div class="t n" style="left:1423px;top:564px">$</div>
<div class="t n" style="left:1415px;top:564px;width:71px;text-align:right;">1,461</div>
<div class="t n" style="left:1500px;top:564px">$</div>
<div class="t n" style="left:1492px;top:564px;width:71px;text-align:right;">1,473</div>
<div class="t n" style="left:1577px;top:564px">$</div>
<div class="t n" style="left:1569px;top:564px;width:71px;text-align:right;">1,486</div>
<div class="t n" style="left:1654px;top:564px">$</div>
<div class="t n" style="left:1646px;top:564px;width:71px;text-align:right;">1,498</div>
<div class="t n" style="left:1731px;top:564px">$</div>
<div class="t n" style="left:1723px;top:564px;width:71px;text-align:right;">1,511</div>
<div class="t n" style="left:1808px;top:564px">$</div>
<div class="t n" style="left:1800px;top:564px;width:71px;text-align:right;">1,523</div>
<div class="t n" style="left:1885px;top:564px">$</div>
<div class="t n" style="left:434px;top:582px">$</div>
<div class="t n" style="left:426px;top:582px;width:109px;text-align:right;">53,692</div>
<div class="t n" style="left:549px;top:582px">$</div>
<div class="t n" style="left:541px;top:582px;width:109px;text-align:right;">65,292</div>
<div class="t n" style="left:664px;top:582px">$</div>
<div class="t n" style="left:656px;top:582px;width:109px;text-align:right;">70,762</div>
<div class="t n" style="left:779px;top:582px">$</div>
<div class="t n" style="left:771px;top:582px;width:109px;text-align:right;">76,614</div>
<div class="t n" style="left:894px;top:582px">$</div>
<div class="t n" style="left:886px;top:582px;width:109px;text-align:right;">82,949</div>
<div class="t n" style="left:1059px;top:582px">$</div>
<div class="t n" style="left:1051px;top:582px;width:50px;text-align:right;">-</div>
<div class="t n" style="left:1129px;top:582px">$</div>
<div class="t n" style="left:1121px;top:582px;width:64px;text-align:right;">4,500</div>
<div class="t n" style="left:1199px;top:582px">$</div>
<div class="t n" style="left:1191px;top:582px;width:64px;text-align:right;">4,613</div>
<div class="t n" style="left:1269px;top:582px">$</div>
<div class="t n" style="left:1261px;top:582px;width:71px;text-align:right;">4,790</div>
<div class="t n" style="left:1346px;top:582px">$</div>
<div class="t n" style="left:1338px;top:582px;width:71px;text-align:right;">4,830</div>
<div class="t n" style="left:1423px;top:582px">$</div>
<div class="t n" style="left:1415px;top:582px;width:71px;text-align:right;">4,871</div>
<div class="t n" style="left:1500px;top:582px">$</div>
<div class="t n" style="left:1492px;top:582px;width:71px;text-align:right;">4,911</div>
<div class="t n" style="left:1577px;top:582px">$</div>
<div class="t n" style="left:1569px;top:582px;width:71px;text-align:right;">4,952</div>
<div class="t n" style="left:1654px;top:582px">$</div>
<div class="t n" style="left:1646px;top:582px;width:71px;text-align:right;">4,993</div>
<div class="t n" style="left:1731px;top:582px">$</div>
<div class="t n" style="left:1723px;top:582px;width:71px;text-align:right;">5,035</div>
<div class="t n" style="left:1808px;top:582px">$</div>
<div class="t n" style="left:1800px;top:582px;width:71px;text-align:right;">5,077</div>
<div class="t n" style="left:1885px;top:582px">$</div>
<div class="t n" style="left:434px;top:600px">$</div>
<div class="t n" style="left:426px;top:600px;width:109px;text-align:right;">11,932</div>
<div class="t n" style="left:549px;top:600px">$</div>
<div class="t n" style="left:541px;top:600px;width:109px;text-align:right;">14,509</div>
<div class="t n" style="left:664px;top:600px">$</div>
<div class="t n" style="left:656px;top:600px;width:109px;text-align:right;">15,725</div>
<div class="t n" style="left:779px;top:600px">$</div>
<div class="t n" style="left:771px;top:600px;width:109px;text-align:right;">17,025</div>
<div class="t n" style="left:894px;top:600px">$</div>
<div class="t n" style="left:886px;top:600px;width:109px;text-align:right;">18,433</div>
<div class="t n" style="left:1059px;top:600px">$</div>
<div class="t n" style="left:1051px;top:600px;width:50px;text-align:right;">-</div>
<div class="t n" style="left:1129px;top:600px">$</div>
<div class="t n" style="left:1121px;top:600px;width:64px;text-align:right;">1,000</div>
<div class="t n" style="left:1199px;top:600px">$</div>
<div class="t n" style="left:1191px;top:600px;width:64px;text-align:right;">1,025</div>
<div class="t n" style="left:1269px;top:600px">$</div>
<div class="t n" style="left:1261px;top:600px;width:71px;text-align:right;">1,065</div>
<div class="t n" style="left:1346px;top:600px">$</div>
<div class="t n" style="left:1338px;top:600px;width:71px;text-align:right;">1,073</div>
<div class="t n" style="left:1423px;top:600px">$</div>
<div class="t n" style="left:1415px;top:600px;width:71px;text-align:right;">1,082</div>
<div class="t n" style="left:1500px;top:600px">$</div>
<div class="t n" style="left:1492px;top:600px;width:71px;text-align:right;">1,091</div>
<div class="t n" style="left:1577px;top:600px">$</div>
<div class="t n" style="left:1569px;top:600px;width:71px;text-align:right;">1,100</div>
<div class="t n" style="left:1654px;top:600px">$</div>
<div class="t n" style="left:1646px;top:600px;width:71px;text-align:right;">1,110</div>
<div class="t n" style="left:1731px;top:600px">$</div>
<div class="t n" style="left:1723px;top:600px;width:71px;text-align:right;">1,119</div>
<div class="t n" style="left:1808px;top:600px">$</div>
<div class="t n" style="left:1800px;top:600px;width:71px;text-align:right;">1,128</div>
<div class="t n" style="left:1885px;top:600px">$</div>
<div class="t n" style="left:434px;top:618px">$</div>
<div class="t n" style="left:426px;top:618px;width:109px;text-align:right;">8,949</div>
<div class="t n" style="left:549px;top:618px">$</div>
<div class="t n" style="left:541px;top:618px;width:109px;text-align:right;">10,882</div>
<div class="t n" style="left:664px;top:618px">$</div>
<div class="t n" style="left:656px;top:618px;width:109px;text-align:right;">11,794</div>
<div class="t n" style="left:779px;top:618px">$</div>
<div class="t n" style="left:771px;top:618px;width:109px;text-align:right;">12,769</div>
<div class="t n" style="left:894px;top:618px">$</div>
<div class="t n" style="left:886px;top:618px;width:109px;text-align:right;">13,825</div>
<div class="t n" style="left:1059px;top:618px">$</div>
<div class="t n" style="left:1051px;top:618px;width:50px;text-align:right;">-</div>
<div class="t n" style="left:1129px;top:618px">$</div>
<div class="t n" style="left:1121px;top:618px;width:64px;text-align:right;">750</div>
<div class="t n" style="left:1199px;top:618px">$</div>
<div class="t n" style="left:1191px;top:618px;width:64px;text-align:right;">769</div>
<div class="t n" style="left:1269px;top:618px">$</div>
<div class="t n" style="left:1261px;top:618px;width:71px;text-align:right;">798</div>
<div class="t n" style="left:1346px;top:618px">$</div>
<div class="t n" style="left:1338px;top:618px;width:71px;text-align:right;">805</div>
<div class="t n" style="left:1423px;top:618px">$</div>
<div class="t n" style="left:1415px;top:618px;width:71px;text-align:right;">812</div>
<div class="t n" style="left:1500px;top:618px">$</div>
<div class="t n" style="left:1492px;top:618px;width:71px;text-align:right;">819</div>
<div class="t n" style="left:1577px;top:618px">$</div>
<div class="t n" style="left:1569px;top:618px;width:71px;text-align:right;">825</div>
<div class="t n" style="left:1654px;top:618px">$</div>
<div class="t n" style="left:1646px;top:618px;width:71px;text-align:right;">832</div>
<div class="t n" style="left:1731px;top:618px">$</div>
<div class="t n" style="left:1723px;top:618px;width:71px;text-align:right;">839</div>
<div class="t n" style="left:1808px;top:618px">$</div>
<div class="t n" style="left:1800px;top:618px;width:71px;text-align:right;">846</div>
<div class="t n" style="left:1885px;top:618px">$</div>
<div class="t n b" style="left:433px;top:708px">$</div>
<div class="t n b" style="left:426px;top:708px;width:109px;text-align:right;">54,501</div>
<div class="t n b" style="left:548px;top:708px">$</div>
<div class="t n b" style="left:541px;top:708px;width:109px;text-align:right;">66,509</div>
<div class="t n b" style="left:663px;top:708px">$</div>
<div class="t n b" style="left:656px;top:708px;width:109px;text-align:right;">72,293</div>
<div class="t n b" style="left:778px;top:708px">$</div>
<div class="t n b" style="left:771px;top:708px;width:109px;text-align:right;">78,515</div>
<div class="t n b" style="left:893px;top:708px">$</div>
<div class="t n b" style="left:886px;top:708px;width:109px;text-align:right;">85,285</div>
<div class="t n b" style="left:1058px;top:708px">$</div>
<div class="t n b" style="left:1051px;top:708px;width:50px;text-align:right;">-</div>
<div class="t n b" style="left:1128px;top:708px">$</div>
<div class="t n b" style="left:1121px;top:708px;width:64px;text-align:right;">4,503</div>
<div class="t n b" style="left:1198px;top:708px">$</div>
<div class="t n b" style="left:1191px;top:708px;width:64px;text-align:right;">4,684</div>
<div class="t n b" style="left:1268px;top:708px">$</div>
<div class="t n b" style="left:1261px;top:708px;width:71px;text-align:right;">4,866</div>
<div class="t n b" style="left:1345px;top:708px">$</div>
<div class="t n b" style="left:1338px;top:708px;width:71px;text-align:right;">4,907</div>
<div class="t n b" style="left:1422px;top:708px">$</div>
<div class="t n b" style="left:1415px;top:708px;width:71px;text-align:right;">4,949</div>
<div class="t n b" style="left:1499px;top:708px">$</div>
<div class="t n b" style="left:1492px;top:708px;width:71px;text-align:right;">4,991</div>
<div class="t n b" style="left:1576px;top:708px">$</div>
<div class="t n b" style="left:1569px;top:708px;width:71px;text-align:right;">5,034</div>
<div class="t n b" style="left:1653px;top:708px">$</div>
<div class="t n b" style="left:1646px;top:708px;width:71px;text-align:right;">5,077</div>
<div class="t n b" style="left:1730px;top:708px">$</div>
<div class="t n b" style="left:1723px;top:708px;width:71px;text-align:right;">5,120</div>
<div class="t n b" style="left:1807px;top:708px">$</div>
<div class="t n b" style="left:1800px;top:708px;width:71px;text-align:right;">5,163</div>
<div class="t n b" style="left:1884px;top:708px">$</div>
<div class="t n" style="left:434px;top:726px">$</div>
<div class="t n" style="left:426px;top:726px;width:109px;text-align:right;">3,120</div>
<div class="t n" style="left:549px;top:726px">$</div>
<div class="t n" style="left:541px;top:726px;width:109px;text-align:right;">3,883</div>
<div class="t n" style="left:664px;top:726px">$</div>
<div class="t n" style="left:656px;top:726px;width:109px;text-align:right;">4,419</div>
<div class="t n" style="left:779px;top:726px">$</div>
<div class="t n" style="left:771px;top:726px;width:109px;text-align:right;">5,028</div>
<div class="t n" style="left:894px;top:726px">$</div>
<div class="t n" style="left:886px;top:726px;width:109px;text-align:right;">5,721</div>
<div class="t n" style="left:1059px;top:726px">$</div>
<div class="t n" style="left:1051px;top:726px;width:50px;text-align:right;">-</div>
<div class="t n" style="left:1129px;top:726px">$</div>
<div class="t n" style="left:1121px;top:726px;width:64px;text-align:right;">240</div>
<div class="t n" style="left:1199px;top:726px">$</div>
<div class="t n" style="left:1191px;top:726px;width:64px;text-align:right;">270</div>
<div class="t n" style="left:1269px;top:726px">$</div>
<div class="t n" style="left:1261px;top:726px;width:71px;text-align:right;">280</div>
<div class="t n" style="left:1346px;top:726px">$</div>
<div class="t n" style="left:1338px;top:726px;width:71px;text-align:right;">283</div>
<div class="t n" style="left:1423px;top:726px">$</div>
<div class="t n" style="left:1415px;top:726px;width:71px;text-align:right;">285</div>
<div class="t n" style="left:1500px;top:726px">$</div>
<div class="t n" style="left:1492px;top:726px;width:71px;text-align:right;">287</div>
<div class="t n" style="left:1577px;top:726px">$</div>
<div class="t n" style="left:1569px;top:726px;width:71px;text-align:right;">290</div>
<div class="t n" style="left:1654px;top:726px">$</div>
<div class="t n" style="left:1646px;top:726px;width:71px;text-align:right;">292</div>
<div class="t n" style="left:1731px;top:726px">$</div>
<div class="t n" style="left:1723px;top:726px;width:71px;text-align:right;">295</div>
<div class="t n" style="left:1808px;top:726px">$</div>
<div class="t n" style="left:1800px;top:726px;width:71px;text-align:right;">297</div>
<div class="t n" style="left:1885px;top:726px">$</div>
<div class="t n" style="left:434px;top:744px">$</div>
<div class="t n" style="left:426px;top:744px;width:109px;text-align:right;">1,949</div>
<div class="t n" style="left:549px;top:744px">$</div>
<div class="t n" style="left:541px;top:744px;width:109px;text-align:right;">2,378</div>
<div class="t n" style="left:664px;top:744px">$</div>
<div class="t n" style="left:656px;top:744px;width:109px;text-align:right;">2,577</div>
<div class="t n" style="left:779px;top:744px">$</div>
<div class="t n" style="left:771px;top:744px;width:109px;text-align:right;">2,790</div>
<div class="t n" style="left:894px;top:744px">$</div>
<div class="t n" style="left:886px;top:744px;width:109px;text-align:right;">3,021</div>
<div class="t n" style="left:1059px;top:744px">$</div>
<div class="t n" style="left:1051px;top:744px;width:50px;text-align:right;">-</div>
<div class="t n" style="left:1129px;top:744px">$</div>
<div class="t n" style="left:1121px;top:744px;width:64px;text-align:right;">158</div>
<div class="t n" style="left:1199px;top:744px">$</div>
<div class="t n" style="left:1191px;top:744px;width:64px;text-align:right;">168</div>
<div class="t n" style="left:1269px;top:744px">$</div>
<div class="t n" style="left:1261px;top:744px;width:71px;text-align:right;">174</div>
<div class="t n" style="left:1346px;top:744px">$</div>
<div class="t n" style="left:1338px;top:744px;width:71px;text-align:right;">176</div>
<div class="t n" style="left:1423px;top:744px">$</div>
<div class="t n" style="left:1415px;top:744px;width:71px;text-align:right;">177</div>
<div class="t n" style="left:1500px;top:744px">$</div>
<div class="t n" style="left:1492px;top:744px;width:71px;text-align:right;">179</div>
<div class="t n" style="left:1577px;top:744px">$</div>
<div class="t n" style="left:1569px;top:744px;width:71px;text-align:right;">180</div>
<div class="t n" style="left:1654px;top:744px">$</div>
<div class="t n" style="left:1646px;top:744px;width:71px;text-align:right;">182</div>
<div class="t n" style="left:1731px;top:744px">$</div>
<div class="t n" style="left:1723px;top:744px;width:71px;text-align:right;">183</div>
<div class="t n" style="left:1808px;top:744px">$</div>
<div class="t n" style="left:1800px;top:744px;width:71px;text-align:right;">185</div>
<div class="t n" style="left:1885px;top:744px">$</div>
<div class="t n" style="left:434px;top:762px">$</div>
<div class="t n" style="left:426px;top:762px;width:109px;text-align:right;">5,769</div>
<div class="t n" style="left:549px;top:762px">$</div>
<div class="t n" style="left:541px;top:762px;width:109px;text-align:right;">7,144</div>
<div class="t n" style="left:664px;top:762px">$</div>
<div class="t n" style="left:656px;top:762px;width:109px;text-align:right;">7,746</div>
<div class="t n" style="left:779px;top:762px">$</div>
<div class="t n" style="left:771px;top:762px;width:109px;text-align:right;">8,387</div>
<div class="t n" style="left:894px;top:762px">$</div>
<div class="t n" style="left:886px;top:762px;width:109px;text-align:right;">9,080</div>
<div class="t n" style="left:1059px;top:762px">$</div>
<div class="t n" style="left:1051px;top:762px;width:50px;text-align:right;">-</div>
<div class="t n" style="left:1129px;top:762px">$</div>
<div class="t n" style="left:1121px;top:762px;width:64px;text-align:right;">450</div>
<div class="t n" style="left:1199px;top:762px">$</div>
<div class="t n" style="left:1191px;top:762px;width:64px;text-align:right;">495</div>
<div class="t n" style="left:1269px;top:762px">$</div>
<div class="t n" style="left:1261px;top:762px;width:71px;text-align:right;">515</div>
<div class="t n" style="left:1346px;top:762px">$</div>
<div class="t n" style="left:1338px;top:762px;width:71px;text-align:right;">520</div>
<div class="t n" style="left:1423px;top:762px">$</div>
<div class="t n" style="left:1415px;top:762px;width:71px;text-align:right;">525</div>
<div class="t n" style="left:1500px;top:762px">$</div>
<div class="t n" style="left:1492px;top:762px;width:71px;text-align:right;">531</div>
<div class="t n" style="left:1577px;top:762px">$</div>
<div class="t n" style="left:1569px;top:762px;width:71px;text-align:right;">536</div>
<div class="t n" style="left:1654px;top:762px">$</div>
<div class="t n" style="left:1646px;top:762px;width:71px;text-align:right;">541</div>
<div class="t n" style="left:1731px;top:762px">$</div>
<div class="t n" style="left:1723px;top:762px;width:71px;text-align:right;">547</div>
<div class="t n" style="left:1808px;top:762px">$</div>
<div class="t n" style="left:1800px;top:762px;width:71px;text-align:right;">552</div>
<div class="t n" style="left:1885px;top:762px">$</div>
<div class="t n" style="left:434px;top:780px">$</div>
<div class="t n" style="left:426px;top:780px;width:109px;text-align:right;">3,633</div>
<div class="t n" style="left:549px;top:780px">$</div>
<div class="t n" style="left:541px;top:780px;width:109px;text-align:right;">4,424</div>
<div class="t n" style="left:664px;top:780px">$</div>
<div class="t n" style="left:656px;top:780px;width:109px;text-align:right;">4,794</div>
<div class="t n" style="left:779px;top:780px">$</div>
<div class="t n" style="left:771px;top:780px;width:109px;text-align:right;">5,191</div>
<div class="t n" style="left:894px;top:780px">$</div>
<div class="t n" style="left:886px;top:780px;width:109px;text-align:right;">5,620</div>
<div class="t n" style="left:1059px;top:780px">$</div>
<div class="t n" style="left:1051px;top:780px;width:50px;text-align:right;">-</div>
<div class="t n" style="left:1129px;top:780px">$</div>
<div class="t n" style="left:1121px;top:780px;width:64px;text-align:right;">300</div>
<div class="t n" style="left:1199px;top:780px">$</div>
<div class="t n" style="left:1191px;top:780px;width:64px;text-align:right;">313</div>
<div class="t n" style="left:1269px;top:780px">$</div>
<div class="t n" style="left:1261px;top:780px;width:71px;text-align:right;">325</div>
<div class="t n" style="left:1346px;top:780px">$</div>
<div class="t n" style="left:1338px;top:780px;width:71px;text-align:right;">327</div>
<div class="t n" style="left:1423px;top:780px">$</div>
<div class="t n" style="left:1415px;top:780px;width:71px;text-align:right;">330</div>
<div class="t n" style="left:1500px;top:780px">$</div>
<div class="t n" style="left:1492px;top:780px;width:71px;text-align:right;">333</div>
<div class="t n" style="left:1577px;top:780px">$</div>
<div class="t n" style="left:1569px;top:780px;width:71px;text-align:right;">336</div>
<div class="t n" style="left:1654px;top:780px">$</div>
<div class="t n" style="left:1646px;top:780px;width:71px;text-align:right;">338</div>
<div class="t n" style="left:1731px;top:780px">$</div>
<div class="t n" style="left:1723px;top:780px;width:71px;text-align:right;">341</div>
<div class="t n" style="left:1808px;top:780px">$</div>
<div class="t n" style="left:1800px;top:780px;width:71px;text-align:right;">344</div>
<div class="t n" style="left:1885px;top:780px">$</div>
<div class="t n" style="left:434px;top:798px">$</div>
<div class="t n" style="left:426px;top:798px;width:109px;text-align:right;">10,440</div>
<div class="t n" style="left:549px;top:798px">$</div>
<div class="t n" style="left:541px;top:798px;width:109px;text-align:right;">12,696</div>
<div class="t n" style="left:664px;top:798px">$</div>
<div class="t n" style="left:656px;top:798px;width:109px;text-align:right;">13,759</div>
<div class="t n" style="left:779px;top:798px">$</div>
<div class="t n" style="left:771px;top:798px;width:109px;text-align:right;">14,897</div>
<div class="t n" style="left:894px;top:798px">$</div>
<div class="t n" style="left:886px;top:798px;width:109px;text-align:right;">16,129</div>
<div class="t n" style="left:1059px;top:798px">$</div>
<div class="t n" style="left:1051px;top:798px;width:50px;text-align:right;">-</div>
<div class="t n" style="left:1129px;top:798px">$</div>
<div class="t n" style="left:1121px;top:798px;width:64px;text-align:right;">875</div>
<div class="t n" style="left:1199px;top:798px">$</div>
<div class="t n" style="left:1191px;top:798px;width:64px;text-align:right;">897</div>
<div class="t n" style="left:1269px;top:798px">$</div>
<div class="t n" style="left:1261px;top:798px;width:71px;text-align:right;">931</div>
<div class="t n" style="left:1346px;top:798px">$</div>
<div class="t n" style="left:1338px;top:798px;width:71px;text-align:right;">939</div>
<div class="t n" style="left:1423px;top:798px">$</div>
<div class="t n" style="left:1415px;top:798px;width:71px;text-align:right;">947</div>
<div class="t n" style="left:1500px;top:798px">$</div>
<div class="t n" style="left:1492px;top:798px;width:71px;text-align:right;">955</div>
<div class="t n" style="left:1577px;top:798px">$</div>
<div class="t n" style="left:1569px;top:798px;width:71px;text-align:right;">963</div>
<div class="t n" style="left:1654px;top:798px">$</div>
<div class="t n" style="left:1646px;top:798px;width:71px;text-align:right;">971</div>
<div class="t n" style="left:1731px;top:798px">$</div>
<div class="t n" style="left:1723px;top:798px;width:71px;text-align:right;">979</div>
<div class="t n" style="left:1808px;top:798px">$</div>
<div class="t n" style="left:1800px;top:798px;width:71px;text-align:right;">987</div>
<div class="t n" style="left:1885px;top:798px">$</div>
<div class="t n" style="left:434px;top:816px">$</div>
<div class="t n" style="left:426px;top:816px;width:109px;text-align:right;">4,832</div>
<div class="t n" style="left:549px;top:816px">$</div>
<div class="t n" style="left:541px;top:816px;width:109px;text-align:right;">5,876</div>
<div class="t n" style="left:664px;top:816px">$</div>
<div class="t n" style="left:656px;top:816px;width:109px;text-align:right;">6,369</div>
<div class="t n" style="left:779px;top:816px">$</div>
<div class="t n" style="left:771px;top:816px;width:109px;text-align:right;">6,895</div>
<div class="t n" style="left:894px;top:816px">$</div>
<div class="t n" style="left:886px;top:816px;width:109px;text-align:right;">7,465</div>
<div class="t n" style="left:1059px;top:816px">$</div>
<div class="t n" style="left:1051px;top:816px;width:50px;text-align:right;">-</div>
<div class="t n" style="left:1129px;top:816px">$</div>
<div class="t n" style="left:1121px;top:816px;width:64px;text-align:right;">405</div>
<div class="t n" style="left:1199px;top:816px">$</div>
<div class="t n" style="left:1191px;top:816px;width:64px;text-align:right;">415</div>
<div class="t n" style="left:1269px;top:816px">$</div>
<div class="t n" style="left:1261px;top:816px;width:71px;text-align:right;">431</div>
<div class="t n" style="left:1346px;top:816px">$</div>
<div class="t n" style="left:1338px;top:816px;width:71px;text-align:right;">435</div>
<div class="t n" style="left:1423px;top:816px">$</div>
<div class="t n" style="left:1415px;top:816px;width:71px;text-align:right;">438</div>
<div class="t n" style="left:1500px;top:816px">$</div>
<div class="t n" style="left:1492px;top:816px;width:71px;text-align:right;">442</div>
<div class="t n" style="left:1577px;top:816px">$</div>
<div class="t n" style="left:1569px;top:816px;width:71px;text-align:right;">446</div>
<div class="t n" style="left:1654px;top:816px">$</div>
<div class="t n" style="left:1646px;top:816px;width:71px;text-align:right;">449</div>
<div class="t n" style="left:1731px;top:816px">$</div>
<div class="t n" style="left:1723px;top:816px;width:71px;text-align:right;">453</div>
<div class="t n" style="left:1808px;top:816px">$</div>
<div class="t n" style="left:1800px;top:816px;width:71px;text-align:right;">457</div>
<div class="t n" style="left:1885px;top:816px">$</div>
<div class="t n" style="left:434px;top:834px">$</div>
<div class="t n" style="left:426px;top:834px;width:109px;text-align:right;">18,792</div>
<div class="t n" style="left:549px;top:834px">$</div>
<div class="t n" style="left:541px;top:834px;width:109px;text-align:right;">22,852</div>
<div class="t n" style="left:664px;top:834px">$</div>
<div class="t n" style="left:656px;top:834px;width:109px;text-align:right;">24,767</div>
<div class="t n" style="left:779px;top:834px">$</div>
<div class="t n" style="left:771px;top:834px;width:109px;text-align:right;">26,815</div>
<div class="t n" style="left:894px;top:834px">$</div>
<div class="t n" style="left:886px;top:834px;width:109px;text-align:right;">29,032</div>
<div class="t n" style="left:1059px;top:834px">$</div>
<div class="t n" style="left:1051px;top:834px;width:50px;text-align:right;">-</div>
<div class="t n" style="left:1129px;top:834px">$</div>
<div class="t n" style="left:1121px;top:834px;width:64px;text-align:right;">1,575</div>
<div class="t n" style="left:1199px;top:834px">$</div>
<div class="t n" style="left:1191px;top:834px;width:64px;text-align:right;">1,614</div>
<div class="t n" style="left:1269px;top:834px">$</div>
<div class="t n" style="left:1261px;top:834px;width:71px;text-align:right;">1,677</div>
<div class="t n" style="left:1346px;top:834px">$</div>
<div class="t n" style="left:1338px;top:834px;width:71px;text-align:right;">1,691</div>
<div class="t n" style="left:1423px;top:834px">$</div>
<div class="t n" style="left:1415px;top:834px;width:71px;text-align:right;">1,705</div>
<div class="t n" style="left:1500px;top:834px">$</div>
<div class="t n" style="left:1492px;top:834px;width:71px;text-align:right;">1,719</div>
<div class="t n" style="left:1577px;top:834px">$</div>
<div class="t n" style="left:1569px;top:834px;width:71px;text-align:right;">1,733</div>
<div class="t n" style="left:1654px;top:834px">$</div>
<div class="t n" style="left:1646px;top:834px;width:71px;text-align:right;">1,748</div>
<div class="t n" style="left:1731px;top:834px">$</div>
<div class="t n" style="left:1723px;top:834px;width:71px;text-align:right;">1,762</div>
<div class="t n" style="left:1808px;top:834px">$</div>
<div class="t n" style="left:1800px;top:834px;width:71px;text-align:right;">1,777</div>
<div class="t n" style="left:1885px;top:834px">$</div>
<div class="t n" style="left:434px;top:852px">$</div>
<div class="t n" style="left:426px;top:852px;width:109px;text-align:right;">4,176</div>
<div class="t n" style="left:549px;top:852px">$</div>
<div class="t n" style="left:541px;top:852px;width:109px;text-align:right;">5,078</div>
<div class="t n" style="left:664px;top:852px">$</div>
<div class="t n" style="left:656px;top:852px;width:109px;text-align:right;">5,504</div>
<div class="t n" style="left:779px;top:852px">$</div>
<div class="t n" style="left:771px;top:852px;width:109px;text-align:right;">5,959</div>
<div class="t n" style="left:894px;top:852px">$</div>
<div class="t n" style="left:886px;top:852px;width:109px;text-align:right;">6,452</div>
<div class="t n" style="left:1059px;top:852px">$</div>
<div class="t n" style="left:1051px;top:852px;width:50px;text-align:right;">-</div>
<div class="t n" style="left:1129px;top:852px">$</div>
<div class="t n" style="left:1121px;top:852px;width:64px;text-align:right;">350</div>
<div class="t n" style="left:1199px;top:852px">$</div>
<div class="t n" style="left:1191px;top:852px;width:64px;text-align:right;">359</div>
<div class="t n" style="left:1269px;top:852px">$</div>
<div class="t n" style="left:1261px;top:852px;width:71px;text-align:right;">373</div>
<div class="t n" style="left:1346px;top:852px">$</div>
<div class="t n" style="left:1338px;top:852px;width:71px;text-align:right;">376</div>
<div class="t n" style="left:1423px;top:852px">$</div>
<div class="t n" style="left:1415px;top:852px;width:71px;text-align:right;">379</div>
<div class="t n" style="left:1500px;top:852px">$</div>
<div class="t n" style="left:1492px;top:852px;width:71px;text-align:right;">382</div>
<div class="t n" style="left:1577px;top:852px">$</div>
<div class="t n" style="left:1569px;top:852px;width:71px;text-align:right;">385</div>
<div class="t n" style="left:1654px;top:852px">$</div>
<div class="t n" style="left:1646px;top:852px;width:71px;text-align:right;">388</div>
<div class="t n" style="left:1731px;top:852px">$</div>
<div class="t n" style="left:1723px;top:852px;width:71px;text-align:right;">392</div>
<div class="t n" style="left:1808px;top:852px">$</div>
<div class="t n" style="left:1800px;top:852px;width:71px;text-align:right;">395</div>
<div class="t n" style="left:1885px;top:852px">$</div>
<div class="t n" style="left:434px;top:870px">$</div>
<div class="t n" style="left:426px;top:870px;width:109px;text-align:right;">1,790</div>
<div class="t n" style="left:549px;top:870px">$</div>
<div class="t n" style="left:541px;top:870px;width:109px;text-align:right;">2,176</div>
<div class="t n" style="left:664px;top:870px">$</div>
<div class="t n" style="left:656px;top:870px;width:109px;text-align:right;">2,359</div>
<div class="t n" style="left:779px;top:870px">$</div>
<div class="t n" style="left:771px;top:870px;width:109px;text-align:right;">2,554</div>
<div class="t n" style="left:894px;top:870px">$</div>
<div class="t n" style="left:886px;top:870px;width:109px;text-align:right;">2,765</div>
<div class="t n" style="left:1059px;top:870px">$</div>
<div class="t n" style="left:1051px;top:870px;width:50px;text-align:right;">-</div>
<div class="t n" style="left:1129px;top:870px">$</div>
<div class="t n" style="left:1121px;top:870px;width:64px;text-align:right;">150</div>
<div class="t n" style="left:1199px;top:870px">$</div>
<div class="t n" style="left:1191px;top:870px;width:64px;text-align:right;">154</div>
<div class="t n" style="left:1269px;top:870px">$</div>
<div class="t n" style="left:1261px;top:870px;width:71px;text-align:right;">160</div>
<div class="t n" style="left:1346px;top:870px">$</div>
<div class="t n" style="left:1338px;top:870px;width:71px;text-align:right;">161</div>
<div class="t n" style="left:1423px;top:870px">$</div>
<div class="t n" style="left:1415px;top:870px;width:71px;text-align:right;">162</div>
<div class="t n" style="left:1500px;top:870px">$</div>
<div class="t n" style="left:1492px;top:870px;width:71px;text-align:right;">164</div>
<div class="t n" style="left:1577px;top:870px">$</div>
<div class="t n" style="left:1569px;top:870px;width:71px;text-align:right;">165</div>
<div class="t n" style="left:1654px;top:870px">$</div>
<div class="t n" style="left:1646px;top:870px;width:71px;text-align:right;">166</div>
<div class="t n" style="left:1731px;top:870px">$</div>
<div class="t n" style="left:1723px;top:870px;width:71px;text-align:right;">168</div>
<div class="t n" style="left:1808px;top:870px">$</div>
<div class="t n" style="left:1800px;top:870px;width:71px;text-align:right;">169</div>
<div class="t n" style="left:1885px;top:870px">$</div>
<div class="a" style="left:1894px;top:22px;width:1px;height:885px;background:#a6a6a6;"></div>
<div class="a" style="left:0px;top:0px;width:1895px;height:22px;background:#e6e6e6;"></div>
<div class="a" style="left:0px;top:22px;width:1894px;height:1px;background:#9e9e9e;"></div>
<div class="a" style="left:25px;top:6px;width:21px;height:16px;background:#d2d2d2;"></div>
<svg class="a" style="left:0;top:0" width="25" height="22"><polygon points="22,10 22,19 13,19" fill="#b9b9b9"/></svg>
<div class="t hd" style="left:26px;top:6px;width:21px;text-align:center;color:#1d6b3f">A</div>
<div class="a" style="left:46px;top:6px;width:1px;height:16px;background:#c0c0c0;"></div>
<div class="t hd" style="left:47px;top:6px;width:330px;text-align:center;color:#111">B</div>
<div class="a" style="left:376px;top:6px;width:1px;height:16px;background:#c0c0c0;"></div>
<div class="t hd" style="left:377px;top:6px;width:50px;text-align:center;color:#111">C</div>
<div class="a" style="left:426px;top:6px;width:1px;height:16px;background:#c0c0c0;"></div>
<div class="t hd" style="left:427px;top:6px;width:115px;text-align:center;color:#111">D</div>
<div class="a" style="left:541px;top:6px;width:1px;height:16px;background:#c0c0c0;"></div>
<div class="t hd" style="left:542px;top:6px;width:115px;text-align:center;color:#111">E</div>
<div class="a" style="left:656px;top:6px;width:1px;height:16px;background:#c0c0c0;"></div>
<div class="t hd" style="left:657px;top:6px;width:115px;text-align:center;color:#111">F</div>
<div class="a" style="left:771px;top:6px;width:1px;height:16px;background:#c0c0c0;"></div>
<div class="t hd" style="left:772px;top:6px;width:115px;text-align:center;color:#111">G</div>
<div class="a" style="left:886px;top:6px;width:1px;height:16px;background:#c0c0c0;"></div>
<div class="t hd" style="left:887px;top:6px;width:115px;text-align:center;color:#111">H</div>
<div class="a" style="left:1001px;top:6px;width:1px;height:16px;background:#c0c0c0;"></div>
<div class="t hd" style="left:1002px;top:6px;width:50px;text-align:center;color:#111">I</div>
<div class="a" style="left:1051px;top:6px;width:1px;height:16px;background:#c0c0c0;"></div>
<div class="t hd" style="left:1052px;top:6px;width:70px;text-align:center;color:#111">J</div>
<div class="a" style="left:1121px;top:6px;width:1px;height:16px;background:#c0c0c0;"></div>
<div class="t hd" style="left:1122px;top:6px;width:70px;text-align:center;color:#111">K</div>
<div class="a" style="left:1191px;top:6px;width:1px;height:16px;background:#c0c0c0;"></div>
<div class="t hd" style="left:1192px;top:6px;width:70px;text-align:center;color:#111">L</div>
<div class="a" style="left:1261px;top:6px;width:1px;height:16px;background:#c0c0c0;"></div>
<div class="t hd" style="left:1262px;top:6px;width:77px;text-align:center;color:#111">M</div>
<div class="a" style="left:1338px;top:6px;width:1px;height:16px;background:#c0c0c0;"></div>
<div class="t hd" style="left:1339px;top:6px;width:77px;text-align:center;color:#111">N</div>
<div class="a" style="left:1415px;top:6px;width:1px;height:16px;background:#c0c0c0;"></div>
<div class="t hd" style="left:1416px;top:6px;width:77px;text-align:center;color:#111">O</div>
<div class="a" style="left:1492px;top:6px;width:1px;height:16px;background:#c0c0c0;"></div>
<div class="t hd" style="left:1493px;top:6px;width:77px;text-align:center;color:#111">P</div>
<div class="a" style="left:1569px;top:6px;width:1px;height:16px;background:#c0c0c0;"></div>
<div class="t hd" style="left:1570px;top:6px;width:77px;text-align:center;color:#111">Q</div>
<div class="a" style="left:1646px;top:6px;width:1px;height:16px;background:#c0c0c0;"></div>
<div class="t hd" style="left:1647px;top:6px;width:77px;text-align:center;color:#111">R</div>
<div class="a" style="left:1723px;top:6px;width:1px;height:16px;background:#c0c0c0;"></div>
<div class="t hd" style="left:1724px;top:6px;width:77px;text-align:center;color:#111">S</div>
<div class="a" style="left:1800px;top:6px;width:1px;height:16px;background:#c0c0c0;"></div>
<div class="t hd" style="left:1801px;top:6px;width:77px;text-align:center;color:#111">T</div>
<div class="a" style="left:1877px;top:6px;width:1px;height:16px;background:#c0c0c0;"></div>
<div class="a" style="left:25px;top:6px;width:1px;height:16px;background:#c0c0c0;"></div>
<div class="a" style="left:46px;top:6px;width:1px;height:16px;background:#c0c0c0;"></div>
<div class="a" style="left:0px;top:23px;width:25px;height:883px;background:#e6e6e6;"></div>
<div class="a" style="left:25px;top:22px;width:1px;height:884px;background:#9e9e9e;"></div>
<div class="a" style="left:0px;top:23px;width:25px;height:17px;background:#d2d2d2;"></div>
<div class="t hd" style="left:0px;top:23px;width:25px;text-align:center;color:#1d6b3f">1</div>
<div class="a" style="left:0px;top:40px;width:25px;height:1px;background:#c8c8c8;"></div>
<div class="t hd" style="left:0px;top:41px;width:25px;text-align:center;color:#111">2</div>
<div class="a" style="left:0px;top:58px;width:25px;height:1px;background:#c8c8c8;"></div>
<div class="t hd" style="left:0px;top:59px;width:25px;text-align:center;color:#111">3</div>
<div class="a" style="left:0px;top:76px;width:25px;height:1px;background:#c8c8c8;"></div>
<div class="t hd" style="left:0px;top:77px;width:25px;text-align:center;color:#111">4</div>
<div class="a" style="left:0px;top:94px;width:25px;height:1px;background:#c8c8c8;"></div>
<div class="t hd" style="left:0px;top:95px;width:25px;text-align:center;color:#111">5</div>
<div class="a" style="left:0px;top:112px;width:25px;height:1px;background:#c8c8c8;"></div>
<div class="t hd" style="left:0px;top:113px;width:25px;text-align:center;color:#111">6</div>
<div class="a" style="left:0px;top:130px;width:25px;height:1px;background:#c8c8c8;"></div>
<div class="t hd" style="left:0px;top:131px;width:25px;text-align:center;color:#111">7</div>
<div class="t hd" style="left:0px;top:150px;width:25px;text-align:center;color:#111">8</div>
<div class="a" style="left:0px;top:167px;width:25px;height:1px;background:#c8c8c8;"></div>
<div class="t hd" style="left:0px;top:168px;width:25px;text-align:center;color:#111">9</div>
<div class="a" style="left:0px;top:185px;width:25px;height:1px;background:#c8c8c8;"></div>
<div class="t hd" style="left:0px;top:186px;width:25px;text-align:center;color:#111">10</div>
<div class="a" style="left:0px;top:203px;width:25px;height:1px;background:#c8c8c8;"></div>
<div class="t hd" style="left:0px;top:204px;width:25px;text-align:center;color:#111">11</div>
<div class="a" style="left:0px;top:221px;width:25px;height:1px;background:#c8c8c8;"></div>
<div class="t hd" style="left:0px;top:222px;width:25px;text-align:center;color:#111">12</div>
<div class="a" style="left:0px;top:239px;width:25px;height:1px;background:#c8c8c8;"></div>
<div class="t hd" style="left:0px;top:240px;width:25px;text-align:center;color:#111">13</div>
<div class="a" style="left:0px;top:257px;width:25px;height:1px;background:#c8c8c8;"></div>
<div class="t hd" style="left:0px;top:258px;width:25px;text-align:center;color:#111">14</div>
<div class="a" style="left:0px;top:275px;width:25px;height:1px;background:#c8c8c8;"></div>
<div class="t hd" style="left:0px;top:276px;width:25px;text-align:center;color:#111">15</div>
<div class="a" style="left:0px;top:293px;width:25px;height:1px;background:#c8c8c8;"></div>
<div class="t hd" style="left:0px;top:294px;width:25px;text-align:center;color:#111">16</div>
<div class="a" style="left:0px;top:311px;width:25px;height:1px;background:#c8c8c8;"></div>
<div class="t hd" style="left:0px;top:312px;width:25px;text-align:center;color:#111">17</div>
<div class="a" style="left:0px;top:329px;width:25px;height:1px;background:#c8c8c8;"></div>
<div class="t hd" style="left:0px;top:330px;width:25px;text-align:center;color:#111">18</div>
<div class="a" style="left:0px;top:347px;width:25px;height:1px;background:#c8c8c8;"></div>
<div class="t hd" style="left:0px;top:348px;width:25px;text-align:center;color:#111">19</div>
<div class="a" style="left:0px;top:365px;width:25px;height:1px;background:#c8c8c8;"></div>
<div class="t hd" style="left:0px;top:366px;width:25px;text-align:center;color:#111">20</div>
<div class="a" style="left:0px;top:383px;width:25px;height:1px;background:#c8c8c8;"></div>
<div class="t hd" style="left:0px;top:384px;width:25px;text-align:center;color:#111">21</div>
<div class="a" style="left:0px;top:401px;width:25px;height:1px;background:#c8c8c8;"></div>
<div class="t hd" style="left:0px;top:402px;width:25px;text-align:center;color:#111">22</div>
<div class="a" style="left:0px;top:419px;width:25px;height:1px;background:#c8c8c8;"></div>
<div class="t hd" style="left:0px;top:420px;width:25px;text-align:center;color:#111">23</div>
<div class="a" style="left:0px;top:437px;width:25px;height:1px;background:#c8c8c8;"></div>
<div class="t hd" style="left:0px;top:438px;width:25px;text-align:center;color:#111">24</div>
<div class="a" style="left:0px;top:455px;width:25px;height:1px;background:#c8c8c8;"></div>
<div class="t hd" style="left:0px;top:456px;width:25px;text-align:center;color:#111">25</div>
<div class="a" style="left:0px;top:473px;width:25px;height:1px;background:#c8c8c8;"></div>
<div class="t hd" style="left:0px;top:474px;width:25px;text-align:center;color:#111">26</div>
<div class="a" style="left:0px;top:491px;width:25px;height:1px;background:#c8c8c8;"></div>
<div class="t hd" style="left:0px;top:492px;width:25px;text-align:center;color:#111">27</div>
<div class="a" style="left:0px;top:509px;width:25px;height:1px;background:#c8c8c8;"></div>
<div class="t hd" style="left:0px;top:510px;width:25px;text-align:center;color:#111">28</div>
<div class="a" style="left:0px;top:527px;width:25px;height:1px;background:#c8c8c8;"></div>
<div class="t hd" style="left:0px;top:528px;width:25px;text-align:center;color:#111">29</div>
<div class="a" style="left:0px;top:545px;width:25px;height:1px;background:#c8c8c8;"></div>
<div class="t hd" style="left:0px;top:546px;width:25px;text-align:center;color:#111">30</div>
<div class="a" style="left:0px;top:563px;width:25px;height:1px;background:#c8c8c8;"></div>
<div class="t hd" style="left:0px;top:564px;width:25px;text-align:center;color:#111">31</div>
<div class="a" style="left:0px;top:581px;width:25px;height:1px;background:#c8c8c8;"></div>
<div class="t hd" style="left:0px;top:582px;width:25px;text-align:center;color:#111">32</div>
<div class="a" style="left:0px;top:599px;width:25px;height:1px;background:#c8c8c8;"></div>
<div class="t hd" style="left:0px;top:600px;width:25px;text-align:center;color:#111">33</div>
<div class="a" style="left:0px;top:617px;width:25px;height:1px;background:#c8c8c8;"></div>
<div class="t hd" style="left:0px;top:618px;width:25px;text-align:center;color:#111">34</div>
<div class="a" style="left:0px;top:635px;width:25px;height:1px;background:#c8c8c8;"></div>
<div class="t hd" style="left:0px;top:636px;width:25px;text-align:center;color:#111">35</div>
<div class="a" style="left:0px;top:653px;width:25px;height:1px;background:#c8c8c8;"></div>
<div class="t hd" style="left:0px;top:654px;width:25px;text-align:center;color:#111">36</div>
<div class="a" style="left:0px;top:671px;width:25px;height:1px;background:#c8c8c8;"></div>
<div class="t hd" style="left:0px;top:672px;width:25px;text-align:center;color:#111">37</div>
<div class="a" style="left:0px;top:689px;width:25px;height:1px;background:#c8c8c8;"></div>
<div class="t hd" style="left:0px;top:690px;width:25px;text-align:center;color:#111">38</div>
<div class="a" style="left:0px;top:707px;width:25px;height:1px;background:#c8c8c8;"></div>
<div class="t hd" style="left:0px;top:708px;width:25px;text-align:center;color:#111">39</div>
<div class="a" style="left:0px;top:725px;width:25px;height:1px;background:#c8c8c8;"></div>
<div class="t hd" style="left:0px;top:726px;width:25px;text-align:center;color:#111">40</div>
<div class="a" style="left:0px;top:743px;width:25px;height:1px;background:#c8c8c8;"></div>
<div class="t hd" style="left:0px;top:744px;width:25px;text-align:center;color:#111">41</div>
<div class="a" style="left:0px;top:761px;width:25px;height:1px;background:#c8c8c8;"></div>
<div class="t hd" style="left:0px;top:762px;width:25px;text-align:center;color:#111">42</div>
<div class="a" style="left:0px;top:779px;width:25px;height:1px;background:#c8c8c8;"></div>
<div class="t hd" style="left:0px;top:780px;width:25px;text-align:center;color:#111">43</div>
<div class="a" style="left:0px;top:797px;width:25px;height:1px;background:#c8c8c8;"></div>
<div class="t hd" style="left:0px;top:798px;width:25px;text-align:center;color:#111">44</div>
<div class="a" style="left:0px;top:815px;width:25px;height:1px;background:#c8c8c8;"></div>
<div class="t hd" style="left:0px;top:816px;width:25px;text-align:center;color:#111">45</div>
<div class="a" style="left:0px;top:833px;width:25px;height:1px;background:#c8c8c8;"></div>
<div class="t hd" style="left:0px;top:834px;width:25px;text-align:center;color:#111">46</div>
<div class="a" style="left:0px;top:851px;width:25px;height:1px;background:#c8c8c8;"></div>
<div class="t hd" style="left:0px;top:852px;width:25px;text-align:center;color:#111">47</div>
<div class="a" style="left:0px;top:869px;width:25px;height:1px;background:#c8c8c8;"></div>
<div class="t hd" style="left:0px;top:870px;width:25px;text-align:center;color:#111">48</div>
<div class="a" style="left:0px;top:887px;width:25px;height:1px;background:#c8c8c8;"></div>
<div class="t hd" style="left:0px;top:888px;width:25px;text-align:center;color:#111">49</div>
<div class="a" style="left:376px;top:22px;width:1px;height:884px;background:#a6a6a6;"></div>
<div class="a" style="left:0px;top:148px;width:1894px;height:1px;background:#a6a6a6;"></div>
<div class="a" style="left:24px;top:21px;width:20px;height:17px;border:2px solid #1e7145"></div>
<div class="a" style="left:44px;top:38px;width:5px;height:5px;background:#1e7145;outline:1px solid #fff"></div>
<div class="a" style="left:1895px;top:0px;width:26px;height:906px;background:#e6e6e6;"></div>
<div class="a" style="left:1920px;top:0px;width:1px;height:966px;background:#222;"></div>
<div class="a" style="left:1898px;top:8px;width:17px;height:17px;background:#fff;border:1px solid #a0a0a0"></div>
<svg class="a" style="left:1898px;top:8px" width="19" height="19"><polygon points="4,12 14,12 9,6.5" fill="#333"/></svg>
<div class="a" style="left:1898px;top:27px;width:17px;height:171px;background:#fff;border:1px solid #a0a0a0"></div>
<div class="a" style="left:1898px;top:887px;width:17px;height:17px;background:#fff;border:1px solid #a0a0a0"></div>
<svg class="a" style="left:1898px;top:887px" width="19" height="19"><polygon points="4,7 14,7 9,12.5" fill="#333"/></svg>
<div class="a" style="left:0px;top:906px;width:1919px;height:32px;background:#e6e6e6;"></div>
<div class="a" style="left:0px;top:906px;width:1894px;height:1px;background:#a6a6a6;"></div>
<svg class="a" style="left:0px;top:906px" width="80" height="30"><polygon points="34.8,12 34.8,21 30.1,16.5" fill="#c2c2c2"/><polygon points="61.9,12 61.9,21 67,16.5" fill="#c2c2c2"/></svg>
<div class="a" style="left:112px;top:910px;width:1px;height:24px;background:#9a9a9a;"></div>
<div class="a" style="left:278px;top:910px;width:1px;height:24px;background:#9a9a9a;"></div>
<div class="a" style="left:747px;top:910px;width:1px;height:24px;background:#9a9a9a;"></div>
<div class="a" style="left:910px;top:910px;width:1px;height:24px;background:#9a9a9a;"></div>
<div class="a" style="left:1105px;top:910px;width:1px;height:24px;background:#9a9a9a;"></div>
<div class="a" style="left:1288px;top:910px;width:1px;height:24px;background:#9a9a9a;"></div>
<div class="a" style="left:1399px;top:910px;width:1px;height:24px;background:#9a9a9a;"></div>
<div class="a" style="left:1590px;top:910px;width:1px;height:24px;background:#9a9a9a;"></div>
<div class="a" style="left:397px;top:906px;width:160px;height:29px;background:#fff;"></div>
<div class="a" style="left:397px;top:906px;width:1px;height:29px;background:#b0b0b0;"></div>
<div class="a" style="left:557px;top:906px;width:1px;height:29px;background:#b0b0b0;"></div>
<div class="a" style="left:397px;top:933px;width:161px;height:2px;background:#1e7145;"></div>
<div class="t tab" style="left:127px;top:910px">Table of Contents</div>
<div class="t tab" style="left:292px;top:910px">Assumption</div>
<div class="t tab" style="left:573px;top:910px">Financial Statements</div>
<div class="t tab" style="left:763px;top:910px">Financial Analysis</div>
<div class="t tab" style="left:926px;top:910px">Investment Summary</div>
<div class="t tab" style="left:1121px;top:910px">Company Summary</div>
<div class="t tab" style="left:1302px;top:910px">Dashboard</div>
<div class="t tab" style="left:1415px;top:910px">Supporting Schedule</div>
<div class="t tab" style="left:409px;top:910px;color:#1e7145;font-weight:bold;font-size:16px">Revenue Analysis</div>
<svg class="a" style="left:1627px;top:911px" width="24" height="24"><circle cx="12" cy="11.5" r="9.5" fill="none" stroke="#7a7a7a" stroke-width="1.3"/><path d="M7 12h10M12 7v10" stroke="#777" stroke-width="2"/></svg>
<svg class="a" style="left:1678px;top:915px" width="6" height="16"><rect x="1" y="1" width="3" height="3" fill="#bdbdbd"/><rect x="1" y="6" width="3" height="3" fill="#bdbdbd"/><rect x="1" y="11" width="3" height="3" fill="#bdbdbd"/></svg>
<div class="a" style="left:1699px;top:913px;width:194px;height:19px;background:#f0f0f0;"></div>
<div class="a" style="left:1699px;top:913px;width:17px;height:17px;background:#fff;border:1px solid #a0a0a0"></div>
<svg class="a" style="left:1699px;top:913px" width="19" height="19"><polygon points="12,4.5 12,14.5 6.5,9.5" fill="#333"/></svg>
<div class="a" style="left:1718px;top:913px;width:37px;height:17px;background:#fff;border:1px solid #a0a0a0"></div>
<div class="a" style="left:1874px;top:913px;width:17px;height:17px;background:#fff;border:1px solid #a0a0a0"></div>
<svg class="a" style="left:1874px;top:913px" width="19" height="19"><polygon points="7,4.5 7,14.5 12.5,9.5" fill="#333"/></svg>
<div class="a" style="left:0px;top:938px;width:1920px;height:28px;background:#f3f3f3;"></div>
<div class="a" style="left:0px;top:938px;width:1920px;height:1px;background:#c6c6c6;"></div>
<div class="t st" style="left:14px;top:945px">Ready</div>
<div class="t st" style="left:71px;top:945px">Calculate</div>
<svg class="a" style="left:140px;top:938px" width="80" height="28"><circle cx="13.3" cy="9.4" r="3.3" fill="#555"/><path d="M11.5 13.3V20.3H24.5V7.5H17.5" fill="none" stroke="#555" stroke-width="1"/><rect x="17.6" y="7" width="7.4" height="3.5" fill="#555"/><path d="M17.1 12.5h1.6M20.2 12.5h1.6M14 15.5h1.6M17.1 15.5h1.6M20.2 15.5h1.6M14 18.3h1.6M17.1 18.3h1.6M20.2 18.3h1.6" stroke="#555" stroke-width="1"/><path d="M54.6 7.4A7 7 0 0 0 55.4 21.4" fill="none" stroke="#555" stroke-width="1.1" stroke-dasharray="2.6 1.3"/><path d="M56.5 6v7.5" stroke="#555" stroke-width="1"/><path d="M54 12l2.5 2.8 2.5-2.8z" fill="#555"/><path d="M60 12.3h3.5" stroke="#555" stroke-width="1"/><path d="M62.3 10l2.6 2.3-2.6 2.3z" fill="#555"/><path d="M58.4 16l9.3 7.6M58.4 23.4l9.1-7.5" stroke="#444" stroke-width="1.6"/></svg>
<div class="t st" style="left:211px;top:945px;font-weight:bold;color:#222">Accessibility: Investigate</div>
<svg class="a" style="left:1400px;top:938px" width="30" height="28"><rect x="9.2" y="5.2" width="18.5" height="12.5" rx="1.6" fill="#505050"/><path d="M13 22h4.7" stroke="#505050" stroke-width="1.6"/><path d="M23.36 14.50 L24.22 13.18 L26.08 14.25 L25.36 15.65 L26.23 17.15 L27.79 17.23 L27.79 19.37 L26.23 19.45 L25.36 20.95 L26.08 22.35 L24.22 23.42 L23.36 22.10 L21.64 22.10 L20.78 23.42 L18.92 22.35 L19.64 20.95 L18.77 19.45 L17.21 19.37 L17.21 17.23 L18.77 17.15 L19.64 15.65 L18.92 14.25 L20.78 13.18 L21.64 14.50Z" fill="#505050" stroke="#f3f3f3" stroke-width="1.6" paint-order="stroke"/><circle cx="22.5" cy="18.3" r="1.4" fill="#f3f3f3"/></svg>
<div class="t st" style="left:1431px;top:945px">Display Settings</div>
<div class="a" style="left:1547px;top:939px;width:50px;height:26px;background:#c6c6c6;"></div>
<svg class="a" style="left:1545px;top:936px" width="150" height="30"><rect x="19.6" y="8.5" width="15" height="15" fill="none" stroke="#666" stroke-width="1.1"/><path d="M24.6 8.5v15M29.6 8.5v15M19.6 13.5h15M19.6 18.5h15" stroke="#666" stroke-width="1.1"/><rect x="68.6" y="8.5" width="16" height="14" fill="none" stroke="#666" stroke-width="1.1"/><rect x="72.7" y="10.6" width="8" height="10" fill="none" stroke="#666" stroke-width="1"/><path d="M74.2 13.4h5M74.2 15.4h5M74.2 17.4h5" stroke="#666" stroke-width="0.9"/><rect x="118.6" y="8.5" width="16" height="15" fill="none" stroke="#666" stroke-width="1.1"/><path d="M123.9 8.5v8.7M128.6 8.5v8.7M118.6 17.2h10" fill="none" stroke="#666" stroke-width="1.1"/></svg>
<div class="a" style="left:1704px;top:951px;width:10px;height:1px;background:#444;"></div>
<div class="a" style="left:1720px;top:952px;width:125px;height:1px;background:#444;"></div>
<div class="a" style="left:1767px;top:945px;width:6px;height:14px;background:#444;"></div>
<div class="a" style="left:1782px;top:949px;width:1px;height:7px;background:#444;"></div>
<div class="a" style="left:1851px;top:951px;width:10px;height:1px;background:#444;"></div>
<div class="a" style="left:1855.5px;top:947px;width:1px;height:9px;background:#444;"></div>
<div class="t st" style="left:1877px;top:945px;color:#444">80%</div>
</body></html>
